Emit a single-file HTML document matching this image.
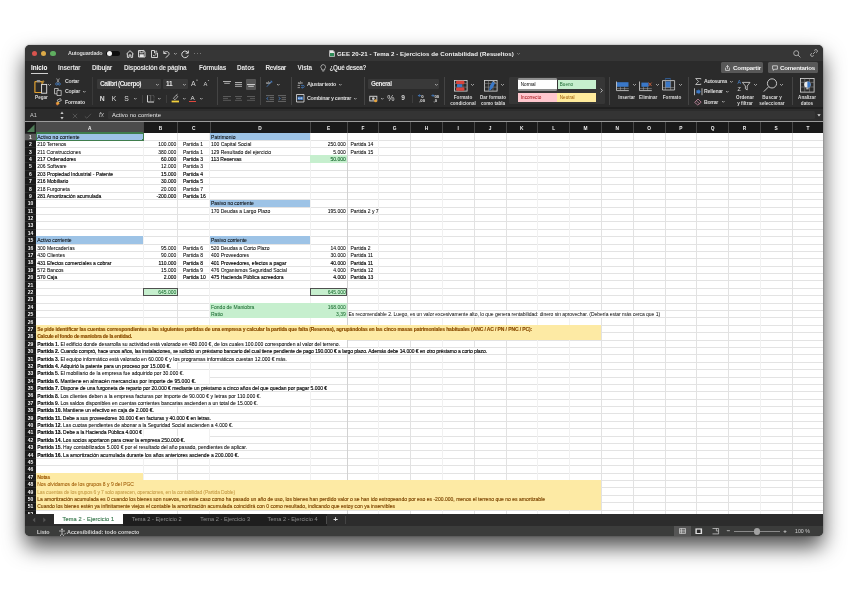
<!DOCTYPE html>
<html lang="es"><head><meta charset="utf-8"><title>Excel</title>
<style>
html,body{margin:0;padding:0;background:#fff;}
body{width:848px;height:599px;position:relative;overflow:hidden;font-family:"Liberation Sans",sans-serif;}
#shadow{position:absolute;left:25px;top:45px;width:798px;height:491px;border-radius:5px;box-shadow:0 11px 21px rgba(0,0,0,.7),0 0 2px rgba(0,0,0,.4);}
#win{position:absolute;left:25px;top:45px;width:798px;height:491px;border-radius:5px;overflow:hidden;background:#2b2b2b;}
#in{position:absolute;left:-25px;top:-45px;width:848px;height:599px;will-change:transform;}
#in div,#in span,#in svg{position:absolute;}
#in span{white-space:pre;}
</style></head><body>
<div id="shadow"></div>
<div id="win"><div id="in">
<div style="left:25.00px;top:45.00px;width:798.00px;height:15.60px;background:#363636;"></div>
<div style="left:25.00px;top:60.60px;width:798.00px;height:47.00px;background:#2b2b2b;"></div>
<div style="left:25.00px;top:107.30px;width:798.00px;height:1.70px;background:#202020;"></div>
<div style="left:25.00px;top:109.00px;width:798.00px;height:12.50px;background:#2c2c2c;"></div>
<div style="left:25.00px;top:121.20px;width:798.00px;height:1.00px;background:#9c9c9c;"></div>
<div style="left:25.00px;top:122.20px;width:798.00px;height:11.00px;background:#1a1a1a;"></div>
<div style="left:25.00px;top:133.00px;width:11.00px;height:381.50px;background:#1a1a1a;"></div>
<div style="left:36.00px;top:133.00px;width:787.00px;height:381.50px;background:#ffffff;"></div>
<div style="left:25.00px;top:514.50px;width:798.00px;height:11.50px;background:#2a2a2a;"></div>
<div style="left:25.00px;top:526.00px;width:798.00px;height:10.00px;background:#3a3b3a;"></div>
<div style="left:31.75px;top:50.55px;width:5.30px;height:5.30px;background:#d9544e;border-radius:50%;"></div>
<div style="left:41.15px;top:50.55px;width:5.30px;height:5.30px;background:#dcaa48;border-radius:50%;"></div>
<div style="left:50.35px;top:50.55px;width:5.30px;height:5.30px;background:#5fae60;border-radius:50%;"></div>
<span style="top:50.16px;font-size:5.4px;line-height:6.48px;color:#dadada;letter-spacing:-0.199px;font-weight:bold;left:68.00px;">Autoguardado</span>
<div style="left:106.30px;top:50.60px;width:13.40px;height:5.60px;background:#0e0e0e;border-radius:2.8px;"></div>
<div style="left:106.70px;top:50.90px;width:5.00px;height:5.00px;background:#f4f4f4;border-radius:50%;"></div>
<span style="top:49.74px;font-size:6.1px;line-height:7.32px;color:#f2f2f2;letter-spacing:0.072px;font-weight:bold;left:337.00px;">GEE 20-21 - Tema 2 - Ejercicios de Contabilidad (Resueltos)</span>
<span style="top:63.76px;font-size:6.4px;line-height:7.68px;color:#ffffff;letter-spacing:-0.035px;font-weight:bold;left:31.00px;">Inicio</span>
<span style="top:63.76px;font-size:6.4px;line-height:7.68px;color:#e4e4e4;letter-spacing:-0.122px;font-weight:bold;left:58.00px;">Insertar</span>
<span style="top:63.76px;font-size:6.4px;line-height:7.68px;color:#e4e4e4;letter-spacing:-0.292px;font-weight:bold;left:92.00px;">Dibujar</span>
<span style="top:63.76px;font-size:6.4px;line-height:7.68px;color:#e4e4e4;letter-spacing:-0.258px;font-weight:bold;left:124.00px;">Disposición de página</span>
<span style="top:63.76px;font-size:6.4px;line-height:7.68px;color:#e4e4e4;letter-spacing:-0.226px;font-weight:bold;left:199.00px;">Fórmulas</span>
<span style="top:63.76px;font-size:6.4px;line-height:7.68px;color:#e4e4e4;letter-spacing:-0.056px;font-weight:bold;left:237.00px;">Datos</span>
<span style="top:63.76px;font-size:6.4px;line-height:7.68px;color:#e4e4e4;letter-spacing:-0.375px;font-weight:bold;left:265.50px;">Revisar</span>
<span style="top:63.76px;font-size:6.4px;line-height:7.68px;color:#e4e4e4;letter-spacing:-0.136px;font-weight:bold;left:297.50px;">Vista</span>
<span style="top:63.76px;font-size:6.4px;line-height:7.68px;color:#e4e4e4;letter-spacing:-0.335px;font-weight:bold;left:329.50px;">¿Qué desea?</span>
<div style="left:31.00px;top:72.60px;width:16.50px;height:1.00px;background:#d0d0d0;"></div>
<div style="left:721.00px;top:62.10px;width:42.00px;height:11.10px;background:#585858;border-radius:1.5px;"></div>
<div style="left:768.00px;top:62.10px;width:50.00px;height:11.10px;background:#585858;border-radius:1.5px;"></div>
<span style="top:64.18px;font-size:6.2px;line-height:7.44px;color:#f4f4f4;letter-spacing:-0.181px;font-weight:bold;left:733.00px;">Compartir</span>
<span style="top:64.18px;font-size:6.2px;line-height:7.44px;color:#f4f4f4;letter-spacing:-0.263px;font-weight:bold;left:780.00px;">Comentarios</span>
<span style="top:94.74px;font-size:4.6px;line-height:5.52px;color:#dcdcdc;font-weight:bold;left:-58.50px;width:200px;text-align:center;">Pegar</span>
<span style="top:78.38px;font-size:5.2px;line-height:6.24px;color:#dcdcdc;letter-spacing:-0.267px;font-weight:bold;left:65.00px;">Cortar</span>
<span style="top:88.38px;font-size:5.2px;line-height:6.24px;color:#dcdcdc;letter-spacing:-0.245px;font-weight:bold;left:65.00px;">Copiar</span>
<span style="top:98.88px;font-size:5.2px;line-height:6.24px;color:#dcdcdc;letter-spacing:-0.114px;font-weight:bold;left:65.00px;">Formato</span>
<div style="left:97.00px;top:78.75px;width:64.00px;height:10.60px;background:#393939;border-radius:1px;"></div>
<div style="left:163.00px;top:78.75px;width:24.50px;height:10.60px;background:#393939;border-radius:1px;"></div>
<span style="top:80.20px;font-size:6.5px;line-height:7.80px;color:#ececec;letter-spacing:-0.507px;font-weight:bold;left:100.00px;">Calibri (Cuerpo)</span>
<span style="top:80.20px;font-size:6.5px;line-height:7.80px;color:#ececec;letter-spacing:-0.135px;font-weight:bold;left:166.00px;">11</span>
<span style="top:94.52px;font-size:6.8px;line-height:8.16px;color:#dcdcdc;font-weight:bold;left:99.80px;">N</span>
<span style="top:94.52px;font-size:6.8px;line-height:8.16px;color:#dcdcdc;left:111.80px;">K</span>
<span style="top:94.52px;font-size:6.8px;line-height:8.16px;color:#dcdcdc;left:124.20px;">S</span>
<div style="left:217.30px;top:77.00px;width:0.60px;height:28.00px;background:#444444;"></div>
<div style="left:260.00px;top:77.00px;width:0.60px;height:28.00px;background:#444444;"></div>
<div style="left:291.00px;top:77.00px;width:0.60px;height:28.00px;background:#444444;"></div>
<div style="left:364.00px;top:77.00px;width:0.60px;height:28.00px;background:#444444;"></div>
<div style="left:444.30px;top:77.00px;width:0.60px;height:28.00px;background:#444444;"></div>
<div style="left:608.90px;top:77.00px;width:0.60px;height:28.00px;background:#444444;"></div>
<div style="left:687.80px;top:77.00px;width:0.60px;height:28.00px;background:#444444;"></div>
<div style="left:791.80px;top:77.00px;width:0.60px;height:28.00px;background:#444444;"></div>
<div style="left:91.50px;top:77.00px;width:0.60px;height:28.00px;background:#3a3a3a;"></div>
<span style="top:80.76px;font-size:5.4px;line-height:6.48px;color:#dcdcdc;letter-spacing:-0.308px;font-weight:bold;left:307.00px;">Ajustar texto</span>
<span style="top:95.26px;font-size:5.4px;line-height:6.48px;color:#dcdcdc;letter-spacing:-0.306px;font-weight:bold;left:307.00px;">Combinar y centrar</span>
<div style="left:368.00px;top:78.75px;width:70.70px;height:10.60px;background:#393939;border-radius:1px;"></div>
<span style="top:80.26px;font-size:6.4px;line-height:7.68px;color:#ececec;letter-spacing:-0.476px;font-weight:bold;left:371.00px;">General</span>
<span style="top:93.58px;font-size:8.2px;line-height:9.84px;color:#dcdcdc;left:387.30px;">%</span>
<span style="top:94.64px;font-size:4.6px;line-height:5.52px;color:#dcdcdc;font-weight:bold;left:363.00px;width:200px;text-align:center;">Formato</span>
<span style="top:100.54px;font-size:4.6px;line-height:5.52px;color:#dcdcdc;font-weight:bold;left:363.00px;width:200px;text-align:center;">condicional</span>
<span style="top:94.64px;font-size:4.6px;line-height:5.52px;color:#dcdcdc;font-weight:bold;left:393.00px;width:200px;text-align:center;">Dar formato</span>
<span style="top:100.54px;font-size:4.6px;line-height:5.52px;color:#dcdcdc;font-weight:bold;left:393.00px;width:200px;text-align:center;">como tabla</span>
<div style="left:509.00px;top:77.00px;width:95.50px;height:27.00px;background:#363636;border-radius:1.5px;"></div>
<div style="left:517.60px;top:78.10px;width:39.80px;height:12.50px;background:#8e8e8e;border-radius:1.2px;"></div>
<div style="left:518.20px;top:79.70px;width:38.60px;height:9.30px;background:#ffffff;"></div>
<div style="left:557.50px;top:80.00px;width:38.60px;height:8.80px;background:#c6efce;"></div>
<div style="left:518.20px;top:92.80px;width:39.00px;height:8.90px;background:#ffc7ce;"></div>
<div style="left:557.20px;top:92.80px;width:39.30px;height:8.90px;background:#ffeb9c;"></div>
<span style="top:81.84px;font-size:4.6px;line-height:5.52px;color:#000;left:520.80px;">Normal</span>
<span style="top:81.84px;font-size:4.6px;line-height:5.52px;color:#1d6b32;left:559.80px;">Bueno</span>
<span style="top:94.64px;font-size:4.6px;line-height:5.52px;color:#9c0006;left:520.80px;">Incorrecto</span>
<span style="top:94.64px;font-size:4.6px;line-height:5.52px;color:#9c5700;left:559.80px;">Neutral</span>
<span style="top:94.64px;font-size:4.6px;line-height:5.52px;color:#dcdcdc;font-weight:bold;left:526.60px;width:200px;text-align:center;">Insertar</span>
<span style="top:94.64px;font-size:4.6px;line-height:5.52px;color:#dcdcdc;font-weight:bold;left:548.20px;width:200px;text-align:center;">Eliminar</span>
<span style="top:94.64px;font-size:4.6px;line-height:5.52px;color:#dcdcdc;font-weight:bold;left:572.00px;width:200px;text-align:center;">Formato</span>
<span style="top:78.38px;font-size:5.2px;line-height:6.24px;color:#dcdcdc;letter-spacing:-0.303px;font-weight:bold;left:704.00px;">Autosuma</span>
<span style="top:88.38px;font-size:5.2px;line-height:6.24px;color:#dcdcdc;letter-spacing:-0.190px;font-weight:bold;left:704.00px;">Rellenar</span>
<span style="top:98.88px;font-size:5.2px;line-height:6.24px;color:#dcdcdc;letter-spacing:-0.316px;font-weight:bold;left:704.00px;">Borrar</span>
<span style="top:94.64px;font-size:4.6px;line-height:5.52px;color:#dcdcdc;font-weight:bold;left:645.00px;width:200px;text-align:center;">Ordenar</span>
<span style="top:100.54px;font-size:4.6px;line-height:5.52px;color:#dcdcdc;font-weight:bold;left:645.00px;width:200px;text-align:center;">y filtrar</span>
<span style="top:94.64px;font-size:4.6px;line-height:5.52px;color:#dcdcdc;font-weight:bold;left:672.00px;width:200px;text-align:center;">Buscar y</span>
<span style="top:100.54px;font-size:4.6px;line-height:5.52px;color:#dcdcdc;font-weight:bold;left:672.00px;width:200px;text-align:center;">seleccionar</span>
<span style="top:94.64px;font-size:4.6px;line-height:5.52px;color:#dcdcdc;font-weight:bold;left:707.00px;width:200px;text-align:center;">Analizar</span>
<span style="top:100.54px;font-size:4.6px;line-height:5.52px;color:#dcdcdc;font-weight:bold;left:707.00px;width:200px;text-align:center;">datos</span>
<div style="left:107.50px;top:110.60px;width:707.00px;height:8.80px;background:#343434;border-radius:1.2px;"></div>
<span style="top:112.14px;font-size:5.6px;line-height:6.72px;color:#c8c8c8;left:30.00px;">A1</span>
<span style="top:112.02px;font-size:5.8px;line-height:6.96px;color:#e8e8e8;letter-spacing:0.051px;left:112.00px;">Activo no corriente</span>
<span style="top:111.46px;font-size:6.4px;line-height:7.68px;color:#bdbdbd;left:99.00px;font-style:italic;font-family:"Liberation Serif",serif;">fx</span>
<div style="left:36.00px;top:122.20px;width:107.30px;height:11.00px;background:#4c4c4c;"></div>
<div style="left:36.00px;top:132.40px;width:107.30px;height:0.90px;background:#3f7d4c;"></div>
<span style="top:125.62px;font-size:4.8px;line-height:5.76px;color:#f0f0f0;font-weight:bold;left:-10.35px;width:200px;text-align:center;">A</span>
<span style="top:125.62px;font-size:4.8px;line-height:5.76px;color:#f0f0f0;font-weight:bold;left:60.40px;width:200px;text-align:center;">B</span>
<div style="left:143.00px;top:122.20px;width:0.70px;height:11.00px;background:#484848;"></div>
<span style="top:125.62px;font-size:4.8px;line-height:5.76px;color:#f0f0f0;font-weight:bold;left:93.65px;width:200px;text-align:center;">C</span>
<div style="left:177.20px;top:122.20px;width:0.70px;height:11.00px;background:#484848;"></div>
<span style="top:125.62px;font-size:4.8px;line-height:5.76px;color:#f0f0f0;font-weight:bold;left:159.95px;width:200px;text-align:center;">D</span>
<div style="left:209.50px;top:122.20px;width:0.70px;height:11.00px;background:#484848;"></div>
<span style="top:125.62px;font-size:4.8px;line-height:5.76px;color:#f0f0f0;font-weight:bold;left:228.55px;width:200px;text-align:center;">E</span>
<div style="left:309.80px;top:122.20px;width:0.70px;height:11.00px;background:#484848;"></div>
<span style="top:125.62px;font-size:4.8px;line-height:5.76px;color:#f0f0f0;font-weight:bold;left:262.85px;width:200px;text-align:center;">F</span>
<div style="left:346.70px;top:122.20px;width:0.70px;height:11.00px;background:#484848;"></div>
<span style="top:125.62px;font-size:4.8px;line-height:5.76px;color:#f0f0f0;font-weight:bold;left:294.60px;width:200px;text-align:center;">G</span>
<div style="left:378.40px;top:122.20px;width:0.70px;height:11.00px;background:#484848;"></div>
<span style="top:125.62px;font-size:4.8px;line-height:5.76px;color:#f0f0f0;font-weight:bold;left:326.40px;width:200px;text-align:center;">H</span>
<div style="left:410.20px;top:122.20px;width:0.70px;height:11.00px;background:#484848;"></div>
<span style="top:125.62px;font-size:4.8px;line-height:5.76px;color:#f0f0f0;font-weight:bold;left:358.20px;width:200px;text-align:center;">I</span>
<div style="left:442.00px;top:122.20px;width:0.70px;height:11.00px;background:#484848;"></div>
<span style="top:125.62px;font-size:4.8px;line-height:5.76px;color:#f0f0f0;font-weight:bold;left:390.00px;width:200px;text-align:center;">J</span>
<div style="left:473.80px;top:122.20px;width:0.70px;height:11.00px;background:#484848;"></div>
<span style="top:125.62px;font-size:4.8px;line-height:5.76px;color:#f0f0f0;font-weight:bold;left:421.80px;width:200px;text-align:center;">K</span>
<div style="left:505.60px;top:122.20px;width:0.70px;height:11.00px;background:#484848;"></div>
<span style="top:125.62px;font-size:4.8px;line-height:5.76px;color:#f0f0f0;font-weight:bold;left:453.60px;width:200px;text-align:center;">L</span>
<div style="left:537.40px;top:122.20px;width:0.70px;height:11.00px;background:#484848;"></div>
<span style="top:125.62px;font-size:4.8px;line-height:5.76px;color:#f0f0f0;font-weight:bold;left:485.40px;width:200px;text-align:center;">M</span>
<div style="left:569.20px;top:122.20px;width:0.70px;height:11.00px;background:#484848;"></div>
<span style="top:125.62px;font-size:4.8px;line-height:5.76px;color:#f0f0f0;font-weight:bold;left:517.20px;width:200px;text-align:center;">N</span>
<div style="left:601.00px;top:122.20px;width:0.70px;height:11.00px;background:#484848;"></div>
<span style="top:125.62px;font-size:4.8px;line-height:5.76px;color:#f0f0f0;font-weight:bold;left:549.00px;width:200px;text-align:center;">O</span>
<div style="left:632.80px;top:122.20px;width:0.70px;height:11.00px;background:#484848;"></div>
<span style="top:125.62px;font-size:4.8px;line-height:5.76px;color:#f0f0f0;font-weight:bold;left:580.80px;width:200px;text-align:center;">P</span>
<div style="left:664.60px;top:122.20px;width:0.70px;height:11.00px;background:#484848;"></div>
<span style="top:125.62px;font-size:4.8px;line-height:5.76px;color:#f0f0f0;font-weight:bold;left:612.60px;width:200px;text-align:center;">Q</span>
<div style="left:696.40px;top:122.20px;width:0.70px;height:11.00px;background:#484848;"></div>
<span style="top:125.62px;font-size:4.8px;line-height:5.76px;color:#f0f0f0;font-weight:bold;left:644.40px;width:200px;text-align:center;">R</span>
<div style="left:728.20px;top:122.20px;width:0.70px;height:11.00px;background:#484848;"></div>
<span style="top:125.62px;font-size:4.8px;line-height:5.76px;color:#f0f0f0;font-weight:bold;left:676.20px;width:200px;text-align:center;">S</span>
<div style="left:760.00px;top:122.20px;width:0.70px;height:11.00px;background:#484848;"></div>
<span style="top:125.62px;font-size:4.8px;line-height:5.76px;color:#f0f0f0;font-weight:bold;left:708.00px;width:200px;text-align:center;">T</span>
<div style="left:791.80px;top:122.20px;width:0.70px;height:11.00px;background:#484848;"></div>
<div style="left:143.00px;top:122.20px;width:0.70px;height:11.00px;background:#484848;"></div>
<svg style="left:26px;top:123.5px;width:9px;height:8.5px" viewBox="0 0 9 8.5"><path d="M8.5 0.5V8H1z" fill="#4f7d57"/></svg>
<div style="left:25.00px;top:133.00px;width:11.00px;height:7.39px;background:#5a5a5a;"></div>
<span style="top:133.79px;font-size:5.0px;line-height:6.00px;color:#f4f4f4;font-weight:bold;left:-69.50px;width:200px;text-align:center;">1</span>
<div style="left:25.00px;top:132.70px;width:11.00px;height:0.60px;background:#2c2c2c;"></div>
<span style="top:141.18px;font-size:5.0px;line-height:6.00px;color:#f4f4f4;font-weight:bold;left:-69.50px;width:200px;text-align:center;">2</span>
<div style="left:25.00px;top:140.09px;width:11.00px;height:0.60px;background:#2c2c2c;"></div>
<span style="top:148.57px;font-size:5.0px;line-height:6.00px;color:#f4f4f4;font-weight:bold;left:-69.50px;width:200px;text-align:center;">3</span>
<div style="left:25.00px;top:147.48px;width:11.00px;height:0.60px;background:#2c2c2c;"></div>
<span style="top:155.96px;font-size:5.0px;line-height:6.00px;color:#f4f4f4;font-weight:bold;left:-69.50px;width:200px;text-align:center;">4</span>
<div style="left:25.00px;top:154.87px;width:11.00px;height:0.60px;background:#2c2c2c;"></div>
<span style="top:163.35px;font-size:5.0px;line-height:6.00px;color:#f4f4f4;font-weight:bold;left:-69.50px;width:200px;text-align:center;">5</span>
<div style="left:25.00px;top:162.26px;width:11.00px;height:0.60px;background:#2c2c2c;"></div>
<span style="top:170.74px;font-size:5.0px;line-height:6.00px;color:#f4f4f4;font-weight:bold;left:-69.50px;width:200px;text-align:center;">6</span>
<div style="left:25.00px;top:169.65px;width:11.00px;height:0.60px;background:#2c2c2c;"></div>
<span style="top:178.13px;font-size:5.0px;line-height:6.00px;color:#f4f4f4;font-weight:bold;left:-69.50px;width:200px;text-align:center;">7</span>
<div style="left:25.00px;top:177.04px;width:11.00px;height:0.60px;background:#2c2c2c;"></div>
<span style="top:185.52px;font-size:5.0px;line-height:6.00px;color:#f4f4f4;font-weight:bold;left:-69.50px;width:200px;text-align:center;">8</span>
<div style="left:25.00px;top:184.43px;width:11.00px;height:0.60px;background:#2c2c2c;"></div>
<span style="top:192.91px;font-size:5.0px;line-height:6.00px;color:#f4f4f4;font-weight:bold;left:-69.50px;width:200px;text-align:center;">9</span>
<div style="left:25.00px;top:191.82px;width:11.00px;height:0.60px;background:#2c2c2c;"></div>
<span style="top:200.30px;font-size:5.0px;line-height:6.00px;color:#f4f4f4;font-weight:bold;left:-69.50px;width:200px;text-align:center;">10</span>
<div style="left:25.00px;top:199.21px;width:11.00px;height:0.60px;background:#2c2c2c;"></div>
<span style="top:207.69px;font-size:5.0px;line-height:6.00px;color:#f4f4f4;font-weight:bold;left:-69.50px;width:200px;text-align:center;">11</span>
<div style="left:25.00px;top:206.60px;width:11.00px;height:0.60px;background:#2c2c2c;"></div>
<span style="top:215.08px;font-size:5.0px;line-height:6.00px;color:#f4f4f4;font-weight:bold;left:-69.50px;width:200px;text-align:center;">12</span>
<div style="left:25.00px;top:213.99px;width:11.00px;height:0.60px;background:#2c2c2c;"></div>
<span style="top:222.47px;font-size:5.0px;line-height:6.00px;color:#f4f4f4;font-weight:bold;left:-69.50px;width:200px;text-align:center;">13</span>
<div style="left:25.00px;top:221.38px;width:11.00px;height:0.60px;background:#2c2c2c;"></div>
<span style="top:229.86px;font-size:5.0px;line-height:6.00px;color:#f4f4f4;font-weight:bold;left:-69.50px;width:200px;text-align:center;">14</span>
<div style="left:25.00px;top:228.77px;width:11.00px;height:0.60px;background:#2c2c2c;"></div>
<span style="top:237.25px;font-size:5.0px;line-height:6.00px;color:#f4f4f4;font-weight:bold;left:-69.50px;width:200px;text-align:center;">15</span>
<div style="left:25.00px;top:236.16px;width:11.00px;height:0.60px;background:#2c2c2c;"></div>
<span style="top:244.64px;font-size:5.0px;line-height:6.00px;color:#f4f4f4;font-weight:bold;left:-69.50px;width:200px;text-align:center;">16</span>
<div style="left:25.00px;top:243.55px;width:11.00px;height:0.60px;background:#2c2c2c;"></div>
<span style="top:252.03px;font-size:5.0px;line-height:6.00px;color:#f4f4f4;font-weight:bold;left:-69.50px;width:200px;text-align:center;">17</span>
<div style="left:25.00px;top:250.94px;width:11.00px;height:0.60px;background:#2c2c2c;"></div>
<span style="top:259.43px;font-size:5.0px;line-height:6.00px;color:#f4f4f4;font-weight:bold;left:-69.50px;width:200px;text-align:center;">18</span>
<div style="left:25.00px;top:258.33px;width:11.00px;height:0.60px;background:#2c2c2c;"></div>
<span style="top:266.81px;font-size:5.0px;line-height:6.00px;color:#f4f4f4;font-weight:bold;left:-69.50px;width:200px;text-align:center;">19</span>
<div style="left:25.00px;top:265.72px;width:11.00px;height:0.60px;background:#2c2c2c;"></div>
<span style="top:274.20px;font-size:5.0px;line-height:6.00px;color:#f4f4f4;font-weight:bold;left:-69.50px;width:200px;text-align:center;">20</span>
<div style="left:25.00px;top:273.11px;width:11.00px;height:0.60px;background:#2c2c2c;"></div>
<span style="top:281.59px;font-size:5.0px;line-height:6.00px;color:#f4f4f4;font-weight:bold;left:-69.50px;width:200px;text-align:center;">21</span>
<div style="left:25.00px;top:280.50px;width:11.00px;height:0.60px;background:#2c2c2c;"></div>
<span style="top:288.99px;font-size:5.0px;line-height:6.00px;color:#f4f4f4;font-weight:bold;left:-69.50px;width:200px;text-align:center;">22</span>
<div style="left:25.00px;top:287.89px;width:11.00px;height:0.60px;background:#2c2c2c;"></div>
<span style="top:296.38px;font-size:5.0px;line-height:6.00px;color:#f4f4f4;font-weight:bold;left:-69.50px;width:200px;text-align:center;">23</span>
<div style="left:25.00px;top:295.28px;width:11.00px;height:0.60px;background:#2c2c2c;"></div>
<span style="top:303.77px;font-size:5.0px;line-height:6.00px;color:#f4f4f4;font-weight:bold;left:-69.50px;width:200px;text-align:center;">24</span>
<div style="left:25.00px;top:302.67px;width:11.00px;height:0.60px;background:#2c2c2c;"></div>
<span style="top:311.16px;font-size:5.0px;line-height:6.00px;color:#f4f4f4;font-weight:bold;left:-69.50px;width:200px;text-align:center;">25</span>
<div style="left:25.00px;top:310.06px;width:11.00px;height:0.60px;background:#2c2c2c;"></div>
<span style="top:318.55px;font-size:5.0px;line-height:6.00px;color:#f4f4f4;font-weight:bold;left:-69.50px;width:200px;text-align:center;">26</span>
<div style="left:25.00px;top:317.45px;width:11.00px;height:0.60px;background:#2c2c2c;"></div>
<span style="top:325.94px;font-size:5.0px;line-height:6.00px;color:#f4f4f4;font-weight:bold;left:-69.50px;width:200px;text-align:center;">27</span>
<div style="left:25.00px;top:324.84px;width:11.00px;height:0.60px;background:#2c2c2c;"></div>
<span style="top:333.32px;font-size:5.0px;line-height:6.00px;color:#f4f4f4;font-weight:bold;left:-69.50px;width:200px;text-align:center;">28</span>
<div style="left:25.00px;top:332.23px;width:11.00px;height:0.60px;background:#2c2c2c;"></div>
<span style="top:340.71px;font-size:5.0px;line-height:6.00px;color:#f4f4f4;font-weight:bold;left:-69.50px;width:200px;text-align:center;">29</span>
<div style="left:25.00px;top:339.62px;width:11.00px;height:0.60px;background:#2c2c2c;"></div>
<span style="top:348.11px;font-size:5.0px;line-height:6.00px;color:#f4f4f4;font-weight:bold;left:-69.50px;width:200px;text-align:center;">30</span>
<div style="left:25.00px;top:347.01px;width:11.00px;height:0.60px;background:#2c2c2c;"></div>
<span style="top:355.50px;font-size:5.0px;line-height:6.00px;color:#f4f4f4;font-weight:bold;left:-69.50px;width:200px;text-align:center;">31</span>
<div style="left:25.00px;top:354.40px;width:11.00px;height:0.60px;background:#2c2c2c;"></div>
<span style="top:362.89px;font-size:5.0px;line-height:6.00px;color:#f4f4f4;font-weight:bold;left:-69.50px;width:200px;text-align:center;">32</span>
<div style="left:25.00px;top:361.79px;width:11.00px;height:0.60px;background:#2c2c2c;"></div>
<span style="top:370.28px;font-size:5.0px;line-height:6.00px;color:#f4f4f4;font-weight:bold;left:-69.50px;width:200px;text-align:center;">33</span>
<div style="left:25.00px;top:369.18px;width:11.00px;height:0.60px;background:#2c2c2c;"></div>
<span style="top:377.67px;font-size:5.0px;line-height:6.00px;color:#f4f4f4;font-weight:bold;left:-69.50px;width:200px;text-align:center;">34</span>
<div style="left:25.00px;top:376.57px;width:11.00px;height:0.60px;background:#2c2c2c;"></div>
<span style="top:385.06px;font-size:5.0px;line-height:6.00px;color:#f4f4f4;font-weight:bold;left:-69.50px;width:200px;text-align:center;">35</span>
<div style="left:25.00px;top:383.96px;width:11.00px;height:0.60px;background:#2c2c2c;"></div>
<span style="top:392.44px;font-size:5.0px;line-height:6.00px;color:#f4f4f4;font-weight:bold;left:-69.50px;width:200px;text-align:center;">36</span>
<div style="left:25.00px;top:391.35px;width:11.00px;height:0.60px;background:#2c2c2c;"></div>
<span style="top:399.83px;font-size:5.0px;line-height:6.00px;color:#f4f4f4;font-weight:bold;left:-69.50px;width:200px;text-align:center;">37</span>
<div style="left:25.00px;top:398.74px;width:11.00px;height:0.60px;background:#2c2c2c;"></div>
<span style="top:407.23px;font-size:5.0px;line-height:6.00px;color:#f4f4f4;font-weight:bold;left:-69.50px;width:200px;text-align:center;">38</span>
<div style="left:25.00px;top:406.13px;width:11.00px;height:0.60px;background:#2c2c2c;"></div>
<span style="top:414.62px;font-size:5.0px;line-height:6.00px;color:#f4f4f4;font-weight:bold;left:-69.50px;width:200px;text-align:center;">39</span>
<div style="left:25.00px;top:413.52px;width:11.00px;height:0.60px;background:#2c2c2c;"></div>
<span style="top:422.00px;font-size:5.0px;line-height:6.00px;color:#f4f4f4;font-weight:bold;left:-69.50px;width:200px;text-align:center;">40</span>
<div style="left:25.00px;top:420.91px;width:11.00px;height:0.60px;background:#2c2c2c;"></div>
<span style="top:429.39px;font-size:5.0px;line-height:6.00px;color:#f4f4f4;font-weight:bold;left:-69.50px;width:200px;text-align:center;">41</span>
<div style="left:25.00px;top:428.30px;width:11.00px;height:0.60px;background:#2c2c2c;"></div>
<span style="top:436.79px;font-size:5.0px;line-height:6.00px;color:#f4f4f4;font-weight:bold;left:-69.50px;width:200px;text-align:center;">42</span>
<div style="left:25.00px;top:435.69px;width:11.00px;height:0.60px;background:#2c2c2c;"></div>
<span style="top:444.18px;font-size:5.0px;line-height:6.00px;color:#f4f4f4;font-weight:bold;left:-69.50px;width:200px;text-align:center;">43</span>
<div style="left:25.00px;top:443.08px;width:11.00px;height:0.60px;background:#2c2c2c;"></div>
<span style="top:451.56px;font-size:5.0px;line-height:6.00px;color:#f4f4f4;font-weight:bold;left:-69.50px;width:200px;text-align:center;">44</span>
<div style="left:25.00px;top:450.47px;width:11.00px;height:0.60px;background:#2c2c2c;"></div>
<span style="top:458.95px;font-size:5.0px;line-height:6.00px;color:#f4f4f4;font-weight:bold;left:-69.50px;width:200px;text-align:center;">45</span>
<div style="left:25.00px;top:457.86px;width:11.00px;height:0.60px;background:#2c2c2c;"></div>
<span style="top:466.35px;font-size:5.0px;line-height:6.00px;color:#f4f4f4;font-weight:bold;left:-69.50px;width:200px;text-align:center;">46</span>
<div style="left:25.00px;top:465.25px;width:11.00px;height:0.60px;background:#2c2c2c;"></div>
<span style="top:473.74px;font-size:5.0px;line-height:6.00px;color:#f4f4f4;font-weight:bold;left:-69.50px;width:200px;text-align:center;">47</span>
<div style="left:25.00px;top:472.64px;width:11.00px;height:0.60px;background:#2c2c2c;"></div>
<span style="top:481.12px;font-size:5.0px;line-height:6.00px;color:#f4f4f4;font-weight:bold;left:-69.50px;width:200px;text-align:center;">48</span>
<div style="left:25.00px;top:480.03px;width:11.00px;height:0.60px;background:#2c2c2c;"></div>
<span style="top:488.51px;font-size:5.0px;line-height:6.00px;color:#f4f4f4;font-weight:bold;left:-69.50px;width:200px;text-align:center;">49</span>
<div style="left:25.00px;top:487.42px;width:11.00px;height:0.60px;background:#2c2c2c;"></div>
<span style="top:495.90px;font-size:5.0px;line-height:6.00px;color:#f4f4f4;font-weight:bold;left:-69.50px;width:200px;text-align:center;">50</span>
<div style="left:25.00px;top:494.81px;width:11.00px;height:0.60px;background:#2c2c2c;"></div>
<span style="top:503.30px;font-size:5.0px;line-height:6.00px;color:#f4f4f4;font-weight:bold;left:-69.50px;width:200px;text-align:center;">51</span>
<div style="left:25.00px;top:502.20px;width:11.00px;height:0.60px;background:#2c2c2c;"></div>
<span style="top:510.69px;font-size:5.0px;line-height:6.00px;color:#f4f4f4;font-weight:bold;left:-69.50px;width:200px;text-align:center;">52</span>
<div style="left:25.00px;top:509.59px;width:11.00px;height:0.60px;background:#2c2c2c;"></div>
<div style="left:36.00px;top:140.04px;width:787.00px;height:0.70px;background:#e3e3e3;"></div>
<div style="left:36.00px;top:147.43px;width:787.00px;height:0.70px;background:#e3e3e3;"></div>
<div style="left:36.00px;top:154.82px;width:787.00px;height:0.70px;background:#e3e3e3;"></div>
<div style="left:36.00px;top:162.21px;width:787.00px;height:0.70px;background:#e3e3e3;"></div>
<div style="left:36.00px;top:169.60px;width:787.00px;height:0.70px;background:#e3e3e3;"></div>
<div style="left:36.00px;top:176.99px;width:787.00px;height:0.70px;background:#e3e3e3;"></div>
<div style="left:36.00px;top:184.38px;width:787.00px;height:0.70px;background:#e3e3e3;"></div>
<div style="left:36.00px;top:191.77px;width:787.00px;height:0.70px;background:#e3e3e3;"></div>
<div style="left:36.00px;top:199.16px;width:787.00px;height:0.70px;background:#e3e3e3;"></div>
<div style="left:36.00px;top:206.55px;width:787.00px;height:0.70px;background:#e3e3e3;"></div>
<div style="left:36.00px;top:213.94px;width:787.00px;height:0.70px;background:#e3e3e3;"></div>
<div style="left:36.00px;top:221.33px;width:787.00px;height:0.70px;background:#e3e3e3;"></div>
<div style="left:36.00px;top:228.72px;width:787.00px;height:0.70px;background:#e3e3e3;"></div>
<div style="left:36.00px;top:236.11px;width:787.00px;height:0.70px;background:#e3e3e3;"></div>
<div style="left:36.00px;top:243.50px;width:787.00px;height:0.70px;background:#e3e3e3;"></div>
<div style="left:36.00px;top:250.89px;width:787.00px;height:0.70px;background:#e3e3e3;"></div>
<div style="left:36.00px;top:258.28px;width:787.00px;height:0.70px;background:#e3e3e3;"></div>
<div style="left:36.00px;top:265.67px;width:787.00px;height:0.70px;background:#e3e3e3;"></div>
<div style="left:36.00px;top:273.06px;width:787.00px;height:0.70px;background:#e3e3e3;"></div>
<div style="left:36.00px;top:280.45px;width:787.00px;height:0.70px;background:#e3e3e3;"></div>
<div style="left:36.00px;top:287.84px;width:787.00px;height:0.70px;background:#e3e3e3;"></div>
<div style="left:36.00px;top:295.23px;width:787.00px;height:0.70px;background:#e3e3e3;"></div>
<div style="left:36.00px;top:302.62px;width:787.00px;height:0.70px;background:#e3e3e3;"></div>
<div style="left:36.00px;top:310.01px;width:787.00px;height:0.70px;background:#e3e3e3;"></div>
<div style="left:36.00px;top:317.40px;width:787.00px;height:0.70px;background:#e3e3e3;"></div>
<div style="left:36.00px;top:324.79px;width:787.00px;height:0.70px;background:#e3e3e3;"></div>
<div style="left:36.00px;top:332.18px;width:787.00px;height:0.70px;background:#e3e3e3;"></div>
<div style="left:36.00px;top:339.57px;width:787.00px;height:0.70px;background:#e3e3e3;"></div>
<div style="left:36.00px;top:346.96px;width:787.00px;height:0.70px;background:#e3e3e3;"></div>
<div style="left:36.00px;top:354.35px;width:787.00px;height:0.70px;background:#e3e3e3;"></div>
<div style="left:36.00px;top:361.74px;width:787.00px;height:0.70px;background:#e3e3e3;"></div>
<div style="left:36.00px;top:369.13px;width:787.00px;height:0.70px;background:#e3e3e3;"></div>
<div style="left:36.00px;top:376.52px;width:787.00px;height:0.70px;background:#e3e3e3;"></div>
<div style="left:36.00px;top:383.91px;width:787.00px;height:0.70px;background:#e3e3e3;"></div>
<div style="left:36.00px;top:391.30px;width:787.00px;height:0.70px;background:#e3e3e3;"></div>
<div style="left:36.00px;top:398.69px;width:787.00px;height:0.70px;background:#e3e3e3;"></div>
<div style="left:36.00px;top:406.08px;width:787.00px;height:0.70px;background:#e3e3e3;"></div>
<div style="left:36.00px;top:413.47px;width:787.00px;height:0.70px;background:#e3e3e3;"></div>
<div style="left:36.00px;top:420.86px;width:787.00px;height:0.70px;background:#e3e3e3;"></div>
<div style="left:36.00px;top:428.25px;width:787.00px;height:0.70px;background:#e3e3e3;"></div>
<div style="left:36.00px;top:435.64px;width:787.00px;height:0.70px;background:#e3e3e3;"></div>
<div style="left:36.00px;top:443.03px;width:787.00px;height:0.70px;background:#e3e3e3;"></div>
<div style="left:36.00px;top:450.42px;width:787.00px;height:0.70px;background:#e3e3e3;"></div>
<div style="left:36.00px;top:457.81px;width:787.00px;height:0.70px;background:#e3e3e3;"></div>
<div style="left:36.00px;top:465.20px;width:787.00px;height:0.70px;background:#e3e3e3;"></div>
<div style="left:36.00px;top:472.59px;width:787.00px;height:0.70px;background:#e3e3e3;"></div>
<div style="left:36.00px;top:479.98px;width:787.00px;height:0.70px;background:#e3e3e3;"></div>
<div style="left:36.00px;top:487.37px;width:787.00px;height:0.70px;background:#e3e3e3;"></div>
<div style="left:36.00px;top:494.76px;width:787.00px;height:0.70px;background:#e3e3e3;"></div>
<div style="left:36.00px;top:502.15px;width:787.00px;height:0.70px;background:#e3e3e3;"></div>
<div style="left:36.00px;top:509.54px;width:787.00px;height:0.70px;background:#e3e3e3;"></div>
<div style="left:142.95px;top:133.00px;width:0.70px;height:381.50px;background:#f1f1f1;"></div>
<div style="left:177.15px;top:133.00px;width:0.70px;height:381.50px;background:#e2e2e2;"></div>
<div style="left:209.45px;top:133.00px;width:0.70px;height:381.50px;background:#f1f1f1;"></div>
<div style="left:309.75px;top:133.00px;width:0.70px;height:381.50px;background:#f1f1f1;"></div>
<div style="left:346.65px;top:133.00px;width:0.70px;height:381.50px;background:#d2d2d2;"></div>
<div style="left:378.35px;top:133.00px;width:0.70px;height:381.50px;background:#f1f1f1;"></div>
<div style="left:410.15px;top:133.00px;width:0.70px;height:381.50px;background:#e2e2e2;"></div>
<div style="left:441.95px;top:133.00px;width:0.70px;height:381.50px;background:#f1f1f1;"></div>
<div style="left:473.75px;top:133.00px;width:0.70px;height:381.50px;background:#e2e2e2;"></div>
<div style="left:505.55px;top:133.00px;width:0.70px;height:381.50px;background:#e2e2e2;"></div>
<div style="left:537.35px;top:133.00px;width:0.70px;height:381.50px;background:#f1f1f1;"></div>
<div style="left:569.15px;top:133.00px;width:0.70px;height:381.50px;background:#f1f1f1;"></div>
<div style="left:600.95px;top:133.00px;width:0.70px;height:381.50px;background:#e2e2e2;"></div>
<div style="left:632.75px;top:133.00px;width:0.70px;height:381.50px;background:#e2e2e2;"></div>
<div style="left:664.55px;top:133.00px;width:0.70px;height:381.50px;background:#e2e2e2;"></div>
<div style="left:696.35px;top:133.00px;width:0.70px;height:381.50px;background:#e2e2e2;"></div>
<div style="left:728.15px;top:133.00px;width:0.70px;height:381.50px;background:#e2e2e2;"></div>
<div style="left:759.95px;top:133.00px;width:0.70px;height:381.50px;background:#f1f1f1;"></div>
<div style="left:791.75px;top:133.00px;width:0.70px;height:381.50px;background:#e2e2e2;"></div>
<div style="left:823.55px;top:133.00px;width:0.70px;height:381.50px;background:#e2e2e2;"></div>
<div style="left:36.00px;top:133.00px;width:107.30px;height:7.39px;background:#9dc3e6;"></div>
<div style="left:209.80px;top:133.00px;width:100.30px;height:7.39px;background:#9dc3e6;"></div>
<div style="left:209.80px;top:199.51px;width:100.30px;height:7.39px;background:#9dc3e6;"></div>
<div style="left:36.00px;top:236.46px;width:107.30px;height:7.39px;background:#9dc3e6;"></div>
<div style="left:209.80px;top:236.46px;width:100.30px;height:7.39px;background:#9dc3e6;"></div>
<div style="left:310.10px;top:155.17px;width:36.90px;height:7.39px;background:#c6efce;"></div>
<div style="left:143.30px;top:288.19px;width:34.20px;height:7.39px;background:#c6efce;"></div>
<div style="left:310.10px;top:288.19px;width:36.90px;height:7.39px;background:#c6efce;"></div>
<div style="left:209.80px;top:302.97px;width:137.20px;height:14.78px;background:#c6efce;"></div>
<div style="left:36.00px;top:325.14px;width:565.30px;height:14.78px;background:#fdeaa4;"></div>
<div style="left:36.00px;top:472.94px;width:107.30px;height:7.39px;background:#fdeaa4;"></div>
<div style="left:36.00px;top:480.33px;width:565.30px;height:29.56px;background:#fdeaa4;"></div>
<span style="top:133.89px;font-size:5.0px;line-height:6.00px;color:#000;letter-spacing:0.058px;left:37.20px;-webkit-text-stroke:0.05px currentColor;">Activo no corriente</span>
<span style="top:133.89px;font-size:5.0px;line-height:6.00px;color:#000;letter-spacing:0.070px;left:211.00px;-webkit-text-stroke:0.05px currentColor;">Patrimonio</span>
<span style="top:141.28px;font-size:5.0px;line-height:6.00px;color:#000;letter-spacing:0.000px;left:37.20px;-webkit-text-stroke:0.05px currentColor;">210 Terrenos</span>
<span style="top:141.28px;font-size:5.0px;line-height:6.00px;color:#000;letter-spacing:0.000px;right:671.70px;-webkit-text-stroke:0.05px currentColor;">100.000</span>
<span style="top:141.28px;font-size:5.0px;line-height:6.00px;color:#000;letter-spacing:0.000px;left:183.00px;-webkit-text-stroke:0.05px currentColor;">Partida 1</span>
<span style="top:148.67px;font-size:5.0px;line-height:6.00px;color:#000;letter-spacing:0.000px;left:37.20px;-webkit-text-stroke:0.05px currentColor;">211 Construcciones</span>
<span style="top:148.67px;font-size:5.0px;line-height:6.00px;color:#000;letter-spacing:0.000px;right:671.70px;-webkit-text-stroke:0.05px currentColor;">380.000</span>
<span style="top:148.67px;font-size:5.0px;line-height:6.00px;color:#000;letter-spacing:0.000px;left:183.00px;-webkit-text-stroke:0.05px currentColor;">Partida 1</span>
<span style="top:156.06px;font-size:5.0px;line-height:6.00px;color:#000;letter-spacing:0.000px;left:37.20px;-webkit-text-stroke:0.14px currentColor;">217 Ordenadores</span>
<span style="top:156.06px;font-size:5.0px;line-height:6.00px;color:#000;letter-spacing:0.000px;right:671.70px;-webkit-text-stroke:0.14px currentColor;">60.000</span>
<span style="top:156.06px;font-size:5.0px;line-height:6.00px;color:#000;letter-spacing:0.000px;left:183.00px;-webkit-text-stroke:0.14px currentColor;">Partida 3</span>
<span style="top:163.45px;font-size:5.0px;line-height:6.00px;color:#000;letter-spacing:0.000px;left:37.20px;-webkit-text-stroke:0.05px currentColor;">206 Software</span>
<span style="top:163.45px;font-size:5.0px;line-height:6.00px;color:#000;letter-spacing:0.000px;right:671.70px;-webkit-text-stroke:0.05px currentColor;">12.000</span>
<span style="top:163.45px;font-size:5.0px;line-height:6.00px;color:#000;letter-spacing:0.000px;left:183.00px;-webkit-text-stroke:0.05px currentColor;">Partida 3</span>
<span style="top:170.84px;font-size:5.0px;line-height:6.00px;color:#000;letter-spacing:0.000px;left:37.20px;-webkit-text-stroke:0.14px currentColor;">203 Propiedad Industrial - Patente</span>
<span style="top:170.84px;font-size:5.0px;line-height:6.00px;color:#000;letter-spacing:0.000px;right:671.70px;-webkit-text-stroke:0.14px currentColor;">15.000</span>
<span style="top:170.84px;font-size:5.0px;line-height:6.00px;color:#000;letter-spacing:0.000px;left:183.00px;-webkit-text-stroke:0.14px currentColor;">Partida 4</span>
<span style="top:178.23px;font-size:5.0px;line-height:6.00px;color:#000;letter-spacing:0.000px;left:37.20px;-webkit-text-stroke:0.14px currentColor;">216 Mobiliario</span>
<span style="top:178.23px;font-size:5.0px;line-height:6.00px;color:#000;letter-spacing:0.000px;right:671.70px;-webkit-text-stroke:0.14px currentColor;">30.000</span>
<span style="top:178.23px;font-size:5.0px;line-height:6.00px;color:#000;letter-spacing:0.000px;left:183.00px;-webkit-text-stroke:0.14px currentColor;">Partida 5</span>
<span style="top:185.62px;font-size:5.0px;line-height:6.00px;color:#000;letter-spacing:0.000px;left:37.20px;-webkit-text-stroke:0.05px currentColor;">218 Furgoneta</span>
<span style="top:185.62px;font-size:5.0px;line-height:6.00px;color:#000;letter-spacing:0.000px;right:671.70px;-webkit-text-stroke:0.05px currentColor;">20.000</span>
<span style="top:185.62px;font-size:5.0px;line-height:6.00px;color:#000;letter-spacing:0.000px;left:183.00px;-webkit-text-stroke:0.05px currentColor;">Partida 7</span>
<span style="top:193.01px;font-size:5.0px;line-height:6.00px;color:#000;letter-spacing:0.000px;left:37.20px;-webkit-text-stroke:0.14px currentColor;">281 Amortización acumulada</span>
<span style="top:193.01px;font-size:5.0px;line-height:6.00px;color:#000;letter-spacing:0.000px;right:671.70px;-webkit-text-stroke:0.14px currentColor;">-200.000</span>
<span style="top:193.01px;font-size:5.0px;line-height:6.00px;color:#000;letter-spacing:0.000px;left:183.00px;-webkit-text-stroke:0.14px currentColor;">Partida 16</span>
<span style="top:244.74px;font-size:5.0px;line-height:6.00px;color:#000;letter-spacing:0.000px;left:37.20px;-webkit-text-stroke:0.05px currentColor;">300 Mercaderías</span>
<span style="top:244.74px;font-size:5.0px;line-height:6.00px;color:#000;letter-spacing:0.000px;right:671.70px;-webkit-text-stroke:0.05px currentColor;">95.000</span>
<span style="top:244.74px;font-size:5.0px;line-height:6.00px;color:#000;letter-spacing:0.000px;left:183.00px;-webkit-text-stroke:0.05px currentColor;">Partida 6</span>
<span style="top:252.13px;font-size:5.0px;line-height:6.00px;color:#000;letter-spacing:0.000px;left:37.20px;-webkit-text-stroke:0.05px currentColor;">430 Clientes</span>
<span style="top:252.13px;font-size:5.0px;line-height:6.00px;color:#000;letter-spacing:0.000px;right:671.70px;-webkit-text-stroke:0.05px currentColor;">90.000</span>
<span style="top:252.13px;font-size:5.0px;line-height:6.00px;color:#000;letter-spacing:0.000px;left:183.00px;-webkit-text-stroke:0.05px currentColor;">Partida 8</span>
<span style="top:259.52px;font-size:5.0px;line-height:6.00px;color:#000;letter-spacing:0.000px;left:37.20px;-webkit-text-stroke:0.14px currentColor;">431 Efectos comerciales a cobrar</span>
<span style="top:259.52px;font-size:5.0px;line-height:6.00px;color:#000;letter-spacing:0.000px;right:671.70px;-webkit-text-stroke:0.14px currentColor;">110.000</span>
<span style="top:259.52px;font-size:5.0px;line-height:6.00px;color:#000;letter-spacing:0.000px;left:183.00px;-webkit-text-stroke:0.14px currentColor;">Partida 8</span>
<span style="top:266.91px;font-size:5.0px;line-height:6.00px;color:#000;letter-spacing:0.000px;left:37.20px;-webkit-text-stroke:0.05px currentColor;">572 Bancos</span>
<span style="top:266.91px;font-size:5.0px;line-height:6.00px;color:#000;letter-spacing:0.000px;right:671.70px;-webkit-text-stroke:0.05px currentColor;">15.000</span>
<span style="top:266.91px;font-size:5.0px;line-height:6.00px;color:#000;letter-spacing:0.000px;left:183.00px;-webkit-text-stroke:0.05px currentColor;">Partida 9</span>
<span style="top:274.30px;font-size:5.0px;line-height:6.00px;color:#000;letter-spacing:0.000px;left:37.20px;-webkit-text-stroke:0.14px currentColor;">570 Caja</span>
<span style="top:274.30px;font-size:5.0px;line-height:6.00px;color:#000;letter-spacing:0.000px;right:671.70px;-webkit-text-stroke:0.14px currentColor;">2.000</span>
<span style="top:274.30px;font-size:5.0px;line-height:6.00px;color:#000;letter-spacing:0.000px;left:183.00px;-webkit-text-stroke:0.14px currentColor;">Partida 10</span>
<span style="top:141.28px;font-size:5.0px;line-height:6.00px;color:#000;letter-spacing:0.000px;left:211.00px;-webkit-text-stroke:0.05px currentColor;">100 Capital Social</span>
<span style="top:141.28px;font-size:5.0px;line-height:6.00px;color:#000;letter-spacing:0.000px;right:502.20px;-webkit-text-stroke:0.05px currentColor;">250.000</span>
<span style="top:141.28px;font-size:5.0px;line-height:6.00px;color:#000;letter-spacing:0.000px;left:350.50px;-webkit-text-stroke:0.05px currentColor;">Partida 14</span>
<span style="top:148.67px;font-size:5.0px;line-height:6.00px;color:#000;letter-spacing:0.000px;left:211.00px;-webkit-text-stroke:0.05px currentColor;">129 Resultado del ejercicio</span>
<span style="top:148.67px;font-size:5.0px;line-height:6.00px;color:#000;letter-spacing:0.000px;right:502.20px;-webkit-text-stroke:0.05px currentColor;">5.000</span>
<span style="top:148.67px;font-size:5.0px;line-height:6.00px;color:#000;letter-spacing:0.000px;left:350.50px;-webkit-text-stroke:0.05px currentColor;">Partida 15</span>
<span style="top:156.06px;font-size:5.0px;line-height:6.00px;color:#000;letter-spacing:0.000px;left:211.00px;-webkit-text-stroke:0.14px currentColor;">113 Reservas</span>
<span style="top:207.79px;font-size:5.0px;line-height:6.00px;color:#000;letter-spacing:0.000px;left:211.00px;-webkit-text-stroke:0.05px currentColor;">170 Deudas a Largo Plazo</span>
<span style="top:207.79px;font-size:5.0px;line-height:6.00px;color:#000;letter-spacing:0.000px;right:502.20px;-webkit-text-stroke:0.05px currentColor;">195.000</span>
<span style="top:207.79px;font-size:5.0px;line-height:6.00px;color:#000;letter-spacing:0.000px;left:350.50px;-webkit-text-stroke:0.05px currentColor;">Partida 2 y 7</span>
<span style="top:244.74px;font-size:5.0px;line-height:6.00px;color:#000;letter-spacing:0.000px;left:211.00px;-webkit-text-stroke:0.05px currentColor;">520 Deudas a Corto Plazo</span>
<span style="top:244.74px;font-size:5.0px;line-height:6.00px;color:#000;letter-spacing:0.000px;right:502.20px;-webkit-text-stroke:0.05px currentColor;">14.000</span>
<span style="top:244.74px;font-size:5.0px;line-height:6.00px;color:#000;letter-spacing:0.000px;left:350.50px;-webkit-text-stroke:0.05px currentColor;">Partida 2</span>
<span style="top:252.13px;font-size:5.0px;line-height:6.00px;color:#000;letter-spacing:0.000px;left:211.00px;-webkit-text-stroke:0.05px currentColor;">400 Proveedores</span>
<span style="top:252.13px;font-size:5.0px;line-height:6.00px;color:#000;letter-spacing:0.000px;right:502.20px;-webkit-text-stroke:0.05px currentColor;">30.000</span>
<span style="top:252.13px;font-size:5.0px;line-height:6.00px;color:#000;letter-spacing:0.000px;left:350.50px;-webkit-text-stroke:0.05px currentColor;">Partida 11</span>
<span style="top:259.52px;font-size:5.0px;line-height:6.00px;color:#000;letter-spacing:0.000px;left:211.00px;-webkit-text-stroke:0.14px currentColor;">401 Proveedores, efectos a pagar</span>
<span style="top:259.52px;font-size:5.0px;line-height:6.00px;color:#000;letter-spacing:0.000px;right:502.20px;-webkit-text-stroke:0.14px currentColor;">40.000</span>
<span style="top:259.52px;font-size:5.0px;line-height:6.00px;color:#000;letter-spacing:0.000px;left:350.50px;-webkit-text-stroke:0.14px currentColor;">Partida 11</span>
<span style="top:266.91px;font-size:5.0px;line-height:6.00px;color:#000;letter-spacing:0.000px;left:211.00px;-webkit-text-stroke:0.05px currentColor;">476 Organismos Seguridad Social</span>
<span style="top:266.91px;font-size:5.0px;line-height:6.00px;color:#000;letter-spacing:0.000px;right:502.20px;-webkit-text-stroke:0.05px currentColor;">4.000</span>
<span style="top:266.91px;font-size:5.0px;line-height:6.00px;color:#000;letter-spacing:0.000px;left:350.50px;-webkit-text-stroke:0.05px currentColor;">Partida 12</span>
<span style="top:274.30px;font-size:5.0px;line-height:6.00px;color:#000;letter-spacing:0.000px;left:211.00px;-webkit-text-stroke:0.14px currentColor;">475 Hacienda Pública acreedora</span>
<span style="top:274.30px;font-size:5.0px;line-height:6.00px;color:#000;letter-spacing:0.000px;right:502.20px;-webkit-text-stroke:0.14px currentColor;">4.000</span>
<span style="top:274.30px;font-size:5.0px;line-height:6.00px;color:#000;letter-spacing:0.000px;left:350.50px;-webkit-text-stroke:0.14px currentColor;">Partida 13</span>
<span style="top:156.06px;font-size:5.0px;line-height:6.00px;color:#1f7035;letter-spacing:0.000px;right:502.20px;-webkit-text-stroke:0.14px currentColor;">50.000</span>
<span style="top:200.40px;font-size:5.0px;line-height:6.00px;color:#000;letter-spacing:0.000px;left:211.00px;-webkit-text-stroke:0.05px currentColor;">Pasivo no corriente</span>
<span style="top:237.35px;font-size:5.0px;line-height:6.00px;color:#000;letter-spacing:0.000px;left:37.20px;-webkit-text-stroke:0.05px currentColor;">Activo corriente</span>
<span style="top:237.35px;font-size:5.0px;line-height:6.00px;color:#000;letter-spacing:0.000px;left:211.00px;-webkit-text-stroke:0.05px currentColor;">Pasivo corriente</span>
<span style="top:289.08px;font-size:5.0px;line-height:6.00px;color:#1f7035;letter-spacing:0.000px;right:671.70px;-webkit-text-stroke:0.05px currentColor;">645.000</span>
<span style="top:289.08px;font-size:5.0px;line-height:6.00px;color:#1f7035;letter-spacing:0.000px;right:502.20px;-webkit-text-stroke:0.05px currentColor;">645.000</span>
<span style="top:303.87px;font-size:5.0px;line-height:6.00px;color:#1f7035;letter-spacing:0.000px;left:211.00px;-webkit-text-stroke:0.05px currentColor;">Fondo de Maniobra</span>
<span style="top:303.87px;font-size:5.0px;line-height:6.00px;color:#1f7035;letter-spacing:0.000px;right:502.20px;-webkit-text-stroke:0.05px currentColor;">168.000</span>
<span style="top:311.25px;font-size:5.0px;line-height:6.00px;color:#1f7035;letter-spacing:0.000px;left:211.00px;-webkit-text-stroke:0.05px currentColor;">Ratio</span>
<span style="top:311.25px;font-size:5.0px;line-height:6.00px;color:#1f7035;letter-spacing:0.000px;right:502.20px;-webkit-text-stroke:0.05px currentColor;">3,39</span>
<div style="left:347.80px;top:310.71px;width:316.70px;height:6.69px;background:#fff;"></div>
<span style="top:311.25px;font-size:5.0px;line-height:6.00px;color:#000;letter-spacing:-0.040px;left:348.50px;">Es recomendable 2. Luego, es un valor excesivamente alto, lo que genera rentabilidad: dinero sin aprovechar. (Debería estar más cerca que 1)</span>
<div style="left:143.00px;top:287.89px;width:34.80px;height:7.99px;background:transparent;border:0.55px solid #505050;box-sizing:border-box;"></div>
<div style="left:309.80px;top:287.89px;width:37.50px;height:7.99px;background:transparent;border:0.55px solid #505050;box-sizing:border-box;"></div>
<span style="top:326.03px;font-size:5.0px;line-height:6.00px;color:#8a4c00;letter-spacing:-0.110px;font-weight:bold;left:37.20px;-webkit-text-stroke:0.14px currentColor;">Se pide identificar las cuentas correspondientes a las siguientes partidas de una empresa y calcular la partida que falta (Reservas), agrupándolas en las cinco masas patrimoniales habituales (ANC / AC / PN / PNC / PC):</span>
<span style="top:333.42px;font-size:5.0px;line-height:6.00px;color:#8a4c00;letter-spacing:-0.192px;font-weight:bold;left:37.20px;-webkit-text-stroke:0.14px currentColor;">Calcule el fondo de maniobra de la entidad.</span>
<div style="left:36.00px;top:340.27px;width:310.50px;height:6.69px;background:#fff;"></div>
<span style="top:340.81px;font-size:5.0px;line-height:6.00px;color:#000;letter-spacing:-0.065px;font-weight:bold;left:37.20px;-webkit-text-stroke:0.05px currentColor;">Partida 1. </span>
<span style="top:340.81px;font-size:5.0px;line-height:6.00px;color:#000;letter-spacing:0.018px;left:60.38px;-webkit-text-stroke:0.05px currentColor;">El edificio donde desarrolla su actividad está valorado en 480.000 €, de los cuales 100.000 corresponden al valor del terreno.</span>
<div style="left:36.00px;top:347.66px;width:469.40px;height:6.69px;background:#fff;"></div>
<span style="top:348.20px;font-size:5.0px;line-height:6.00px;color:#000;letter-spacing:-0.065px;font-weight:bold;left:37.20px;-webkit-text-stroke:0.14px currentColor;">Partida 2. </span>
<span style="top:348.20px;font-size:5.0px;line-height:6.00px;color:#000;letter-spacing:-0.068px;left:60.38px;-webkit-text-stroke:0.14px currentColor;">Cuando compró, hace unos años, las instalaciones, se solicitó un préstamo bancario del cual tiene pendiente de pago 190.000 € a largo plazo. Además debe 14.000 € en otro préstamo a corto plazo.</span>
<div style="left:36.00px;top:355.05px;width:273.60px;height:6.69px;background:#fff;"></div>
<span style="top:355.59px;font-size:5.0px;line-height:6.00px;color:#000;letter-spacing:-0.065px;font-weight:bold;left:37.20px;-webkit-text-stroke:0.05px currentColor;">Partida 3. </span>
<span style="top:355.59px;font-size:5.0px;line-height:6.00px;color:#000;letter-spacing:0.035px;left:60.38px;-webkit-text-stroke:0.05px currentColor;">El equipo informático está valorado en 60.000 € y los programas informáticos cuestan 12.000 € más.</span>
<div style="left:36.00px;top:362.44px;width:141.00px;height:6.69px;background:#fff;"></div>
<span style="top:362.99px;font-size:5.0px;line-height:6.00px;color:#000;letter-spacing:-0.065px;font-weight:bold;left:37.20px;-webkit-text-stroke:0.14px currentColor;">Partida 4. </span>
<span style="top:362.99px;font-size:5.0px;line-height:6.00px;color:#000;letter-spacing:0.011px;left:60.38px;-webkit-text-stroke:0.14px currentColor;">Adquirió la patente para un proceso por 15.000 €.</span>
<div style="left:36.00px;top:369.83px;width:173.30px;height:6.69px;background:#fff;"></div>
<span style="top:370.38px;font-size:5.0px;line-height:6.00px;color:#000;letter-spacing:-0.065px;font-weight:bold;left:37.20px;-webkit-text-stroke:0.05px currentColor;">Partida 5. </span>
<span style="top:370.38px;font-size:5.0px;line-height:6.00px;color:#000;letter-spacing:0.039px;left:60.38px;-webkit-text-stroke:0.05px currentColor;">El mobiliario de la empresa fue adquirido por 30.000 €.</span>
<div style="left:36.00px;top:377.22px;width:173.30px;height:6.69px;background:#fff;"></div>
<span style="top:377.76px;font-size:5.0px;line-height:6.00px;color:#000;letter-spacing:-0.065px;font-weight:bold;left:37.20px;-webkit-text-stroke:0.14px currentColor;">Partida 6. </span>
<span style="top:377.76px;font-size:5.0px;line-height:6.00px;color:#000;letter-spacing:0.086px;left:60.38px;-webkit-text-stroke:0.14px currentColor;">Mantiene en almacén mercancías por importe de 95.000 €.</span>
<div style="left:36.00px;top:384.61px;width:310.50px;height:6.69px;background:#fff;"></div>
<span style="top:385.15px;font-size:5.0px;line-height:6.00px;color:#000;letter-spacing:-0.065px;font-weight:bold;left:37.20px;-webkit-text-stroke:0.14px currentColor;">Partida 7. </span>
<span style="top:385.15px;font-size:5.0px;line-height:6.00px;color:#000;letter-spacing:-0.016px;left:60.38px;-webkit-text-stroke:0.14px currentColor;">Dispone de una furgoneta de reparto por 20.000 € mediante un préstamo a cinco años del que quedan por pagar 5.000 €</span>
<div style="left:36.00px;top:392.00px;width:273.60px;height:6.69px;background:#fff;"></div>
<span style="top:392.54px;font-size:5.0px;line-height:6.00px;color:#000;letter-spacing:-0.065px;font-weight:bold;left:37.20px;-webkit-text-stroke:0.05px currentColor;">Partida 8. </span>
<span style="top:392.54px;font-size:5.0px;line-height:6.00px;color:#000;letter-spacing:0.048px;left:60.38px;-webkit-text-stroke:0.05px currentColor;">Los clientes deben a la empresa facturas por importe de 90.000 € y letras por 110.000 €.</span>
<div style="left:36.00px;top:399.39px;width:273.60px;height:6.69px;background:#fff;"></div>
<span style="top:399.93px;font-size:5.0px;line-height:6.00px;color:#000;letter-spacing:-0.065px;font-weight:bold;left:37.20px;-webkit-text-stroke:0.05px currentColor;">Partida 9. </span>
<span style="top:399.93px;font-size:5.0px;line-height:6.00px;color:#000;letter-spacing:-0.003px;left:60.38px;-webkit-text-stroke:0.05px currentColor;">Los saldos disponibles en cuentas corrientes bancarias ascienden a un total de 15.000 €.</span>
<div style="left:36.00px;top:406.78px;width:141.00px;height:6.69px;background:#fff;"></div>
<span style="top:407.32px;font-size:5.0px;line-height:6.00px;color:#000;letter-spacing:-0.067px;font-weight:bold;left:37.20px;-webkit-text-stroke:0.14px currentColor;">Partida 10. </span>
<span style="top:407.32px;font-size:5.0px;line-height:6.00px;color:#000;letter-spacing:0.022px;left:63.08px;-webkit-text-stroke:0.14px currentColor;">Mantiene un efectivo en caja de 2.000 €.</span>
<div style="left:36.00px;top:414.17px;width:273.60px;height:6.69px;background:#fff;"></div>
<span style="top:414.71px;font-size:5.0px;line-height:6.00px;color:#000;letter-spacing:-0.066px;font-weight:bold;left:37.20px;-webkit-text-stroke:0.14px currentColor;">Partida 11. </span>
<span style="top:414.71px;font-size:5.0px;line-height:6.00px;color:#000;letter-spacing:0.001px;left:62.81px;-webkit-text-stroke:0.14px currentColor;">Debe a sus proveedores 30.000 € en facturas y 40.000 € en letras.</span>
<div style="left:36.00px;top:421.56px;width:273.60px;height:6.69px;background:#fff;"></div>
<span style="top:422.10px;font-size:5.0px;line-height:6.00px;color:#000;letter-spacing:-0.067px;font-weight:bold;left:37.20px;-webkit-text-stroke:0.05px currentColor;">Partida 12. </span>
<span style="top:422.10px;font-size:5.0px;line-height:6.00px;color:#000;letter-spacing:-0.006px;left:63.08px;-webkit-text-stroke:0.05px currentColor;">Las cuotas pendientes de abonar a la Seguridad Social ascienden a 4.000 €.</span>
<div style="left:36.00px;top:428.95px;width:106.80px;height:6.69px;background:#fff;"></div>
<span style="top:429.49px;font-size:5.0px;line-height:6.00px;color:#000;letter-spacing:-0.067px;font-weight:bold;left:37.20px;-webkit-text-stroke:0.14px currentColor;">Partida 13. </span>
<span style="top:429.49px;font-size:5.0px;line-height:6.00px;color:#000;letter-spacing:-0.025px;left:63.08px;-webkit-text-stroke:0.14px currentColor;">Debe a la Hacienda Pública 4.000 €</span>
<div style="left:36.00px;top:436.34px;width:173.30px;height:6.69px;background:#fff;"></div>
<span style="top:436.88px;font-size:5.0px;line-height:6.00px;color:#000;letter-spacing:-0.067px;font-weight:bold;left:37.20px;-webkit-text-stroke:0.14px currentColor;">Partida 14. </span>
<span style="top:436.88px;font-size:5.0px;line-height:6.00px;color:#000;letter-spacing:0.004px;left:63.08px;-webkit-text-stroke:0.14px currentColor;">Los socios aportaron para crear la empresa 250.000 €.</span>
<div style="left:36.00px;top:443.73px;width:273.60px;height:6.69px;background:#fff;"></div>
<span style="top:444.27px;font-size:5.0px;line-height:6.00px;color:#000;letter-spacing:-0.067px;font-weight:bold;left:37.20px;-webkit-text-stroke:0.05px currentColor;">Partida 15. </span>
<span style="top:444.27px;font-size:5.0px;line-height:6.00px;color:#000;letter-spacing:0.013px;left:63.08px;-webkit-text-stroke:0.05px currentColor;">Hay contabilizados 5.000 € por el resultado del año pasado, pendientes de aplicar.</span>
<div style="left:36.00px;top:451.12px;width:273.60px;height:6.69px;background:#fff;"></div>
<span style="top:451.66px;font-size:5.0px;line-height:6.00px;color:#000;letter-spacing:-0.067px;font-weight:bold;left:37.20px;-webkit-text-stroke:0.14px currentColor;">Partida 16. </span>
<span style="top:451.66px;font-size:5.0px;line-height:6.00px;color:#000;letter-spacing:0.030px;left:63.08px;-webkit-text-stroke:0.14px currentColor;">La amortización acumulada durante los años anteriores asciende a 200.000 €.</span>
<span style="top:473.83px;font-size:5.0px;line-height:6.00px;color:#9c5700;letter-spacing:-0.218px;font-weight:bold;left:37.20px;-webkit-text-stroke:0.05px currentColor;">Notas</span>
<span style="top:481.22px;font-size:5.0px;line-height:6.00px;color:#9c5700;letter-spacing:0.002px;left:37.20px;-webkit-text-stroke:0.05px currentColor;">Nos olvidamos de los grupos 8 y 9 del PGC</span>
<span style="top:488.61px;font-size:5.0px;line-height:6.00px;color:#c49a45;letter-spacing:-0.131px;left:37.20px;-webkit-text-stroke:0.05px currentColor;">Las cuentas de los grupos 6 y 7 solo aparecen, operaciones, en la contabilidad (Partida Doble)</span>
<span style="top:496.00px;font-size:5.0px;line-height:6.00px;color:#7d4500;letter-spacing:0.022px;left:37.20px;-webkit-text-stroke:0.14px currentColor;">La amortización acumulada es 0 cuando los bienes son nuevos, en este caso como ha pasado un año de uso, los bienes han perdido valor o se han ido estropeando por eso es -200.000, menos el terreno que no es amortizable</span>
<span style="top:503.39px;font-size:5.0px;line-height:6.00px;color:#7d4500;letter-spacing:0.036px;left:37.20px;-webkit-text-stroke:0.14px currentColor;">Cuando los bienes estén ya infinitamente viejos el contable la amortización acumulada coincidirá con 0 como resultado, indicando que estoy con ya inservibles</span>
<div style="left:35.50px;top:132.50px;width:108.30px;height:8.39px;background:transparent;border:0.9px solid #3f7d4c;box-sizing:border-box;"></div>
<div style="left:142.10px;top:139.19px;width:2.20px;height:2.20px;background:#3f7d4c;"></div>
<div style="left:25.00px;top:514.30px;width:798.00px;height:11.40px;background:#2c2c2c;"></div>
<div style="left:123.00px;top:514.30px;width:203.50px;height:11.40px;background:#1e1e1e;"></div>
<div style="left:54.00px;top:514.30px;width:69.00px;height:9.80px;background:#ffffff;"></div>
<span style="top:516.24px;font-size:5.6px;line-height:6.72px;color:#3b7a50;letter-spacing:0.132px;left:-11.60px;width:200px;text-align:center;-webkit-text-stroke:0.15px currentColor;">Tema 2 - Ejercicio 1</span>
<span style="top:516.24px;font-size:5.6px;line-height:6.72px;color:#8e8e8e;letter-spacing:0.042px;left:56.80px;width:200px;text-align:center;">Tema 2 - Ejercicio 2</span>
<span style="top:516.24px;font-size:5.6px;line-height:6.72px;color:#8e8e8e;letter-spacing:0.042px;left:125.30px;width:200px;text-align:center;">Tema 2 - Ejercicio 3</span>
<span style="top:516.24px;font-size:5.6px;line-height:6.72px;color:#8e8e8e;letter-spacing:0.042px;left:192.60px;width:200px;text-align:center;">Tema 2 - Ejercicio 4</span>
<span style="top:514.50px;font-size:8px;line-height:9.60px;color:#dcdcdc;font-weight:bold;left:235.70px;width:200px;text-align:center;">+</span>
<div style="left:326.30px;top:515.50px;width:0.70px;height:8.50px;background:#4c4c4c;"></div>
<div style="left:344.50px;top:515.50px;width:0.60px;height:8.50px;background:#444444;"></div>
<svg style="left:30px;top:516.5px;width:18px;height:6px" viewBox="0 0 18 6"><path d="M5.2 0.6L2.6 3L5.2 5.4z M13.3 0.6L15.9 3L13.3 5.4z" fill="#555555"/></svg>
<div style="left:25.00px;top:525.70px;width:798.00px;height:10.30px;background:#3b3c3b;"></div>
<span style="top:528.56px;font-size:5.4px;line-height:6.48px;color:#d6d6d6;letter-spacing:-0.080px;font-weight:bold;left:37.00px;">Listo</span>
<span style="top:528.56px;font-size:5.4px;line-height:6.48px;color:#d6d6d6;letter-spacing:-0.015px;font-weight:bold;left:67.00px;">Accesibilidad: todo correcto</span>
<span style="top:528.48px;font-size:5.2px;line-height:6.24px;color:#d0d0d0;letter-spacing:0.051px;left:795.00px;">100 %</span>
<div style="left:734.00px;top:531.10px;width:45.50px;height:0.70px;background:#8a8a8a;"></div>
<div style="left:753.60px;top:528.00px;width:6.80px;height:6.80px;background:#a2a2a2;border-radius:50%;"></div>
<span style="top:527.60px;font-size:6px;line-height:7.20px;color:#d8d8d8;font-weight:bold;left:628.50px;width:200px;text-align:center;">−</span>
<span style="top:527.80px;font-size:6px;line-height:7.20px;color:#d8d8d8;font-weight:bold;left:685.00px;width:200px;text-align:center;">+</span>
<div style="left:674.00px;top:526.00px;width:17.00px;height:10.00px;background:#555555;"></div>
<svg style="left:125.60px;top:49.60px;width:8px;height:8px;overflow:visible;" viewBox="0 0 8 8"><path d="M0.5 3.9L4 0.7L7.5 3.9M1.4 3.3V7.4H3.1V4.9H4.9V7.4H6.6V3.3" fill="none" stroke="#e2e2e2" stroke-width="0.9" /></svg>
<svg style="left:137.80px;top:49.90px;width:7.5px;height:7.5px;overflow:visible;" viewBox="0 0 7.5 7.5"><path d="M0.5 0.5H5.8L7 1.7V7H0.5z" fill="none" stroke="#e6e6e6" stroke-width="0.9" /><path d="M2 0.5V2.8H5.2V0.5" fill="none" stroke="#e6e6e6" stroke-width="0.8" /><rect x="1.7" y="4.3" width="4.1" height="2.7" fill="#e6e6e6"/></svg>
<svg style="left:151.30px;top:49.60px;width:7px;height:8px;overflow:visible;" viewBox="0 0 7 8"><path d="M0.5 0.5H3.5V3H6.5V7.5H0.5z" fill="none" stroke="#e2e2e2" stroke-width="0.9" /><path d="M2 5L3.2 6.2L5.5 3.8" fill="none" stroke="#d6d6d6" stroke-width="0.8" /><path d="M5.2 0.3V2M4.4 1.2L5.2 2L6 1.2" fill="none" stroke="#d6d6d6" stroke-width="0.6" /></svg>
<svg style="left:163.20px;top:49.60px;width:7px;height:8px;overflow:visible;" viewBox="0 0 7 8"><path d="M0.8 0.8V3.5H3.5M0.9 3.4C2 1.1 5.4 0.9 6 3.3C6.4 5.1 4.6 6.1 2.6 7.6" fill="none" stroke="#e0e0e0" stroke-width="0.9" /></svg>
<svg style="left:173.90px;top:53.20px;width:2.8px;height:1.4px;overflow:visible;" viewBox="0 0 2.8 1.4"><path d="M0 0L1.4 1.4L2.8 0" fill="none" stroke="#bdbdbd" stroke-width="0.75"/></svg>
<svg style="left:181.30px;top:49.60px;width:8px;height:8px;overflow:visible;" viewBox="0 0 8 8"><path d="M7.3 0.6V3.2H4.7M7.1 3.1A3.3 3.3 0 1 0 7.2 5.4" fill="none" stroke="#e0e0e0" stroke-width="0.95" /></svg>
<div style="left:194.30px;top:53.20px;width:1.10px;height:1.10px;background:#8c8c8c;border-radius:50%;"></div>
<div style="left:196.90px;top:53.20px;width:1.10px;height:1.10px;background:#8c8c8c;border-radius:50%;"></div>
<div style="left:199.50px;top:53.20px;width:1.10px;height:1.10px;background:#8c8c8c;border-radius:50%;"></div>
<svg style="left:329.00px;top:49.50px;width:6px;height:7px;overflow:visible;" viewBox="0 0 6 7"><path d="M0.3 0.3H4L5.7 2V6.7H0.3z" fill="#e8e8e8"/><rect x="1" y="3" width="4" height="3.2" fill="#2e8b57"/><path d="M4 0.3V2H5.7" fill="#bdbdbd"/></svg>
<svg style="left:516.80px;top:52.55px;width:3.0px;height:1.5px;overflow:visible;" viewBox="0 0 3.0 1.5"><path d="M0 0L1.5 1.5L3.0 0" fill="none" stroke="#8a8a8a" stroke-width="0.75"/></svg>
<svg style="left:793.00px;top:49.60px;width:8px;height:8px;overflow:visible;" viewBox="0 0 8 8"><path d="M3.2 0.7A2.5 2.5 0 1 0 3.2 5.7A2.5 2.5 0 1 0 3.2 0.7M5 5L7.4 7.4" fill="none" stroke="#b8b8b8" stroke-width="0.85" /></svg>
<svg style="left:810.00px;top:49.40px;width:8px;height:8px;overflow:visible;" viewBox="0 0 8 8"><path d="M3 5L5.4 2.6M4.2 1.6L5 0.9A1.5 1.5 0 0 1 7.1 3L6.2 3.9M3.8 6.4L3 7.1A1.5 1.5 0 0 1 0.9 5L1.8 4.1" fill="none" stroke="#b8b8b8" stroke-width="0.85" /></svg>
<svg style="left:320.00px;top:63.80px;width:6.5px;height:7.5px;overflow:visible;" viewBox="0 0 6.5 7.5"><path d="M3.2 0.6A2.4 2.4 0 0 0 1.8 4.9V6H4.6V4.9A2.4 2.4 0 0 0 3.2 0.6M2.2 7H4.2" fill="none" stroke="#cfcfcf" stroke-width="0.7" /></svg>
<svg style="left:725.00px;top:64.80px;width:6px;height:6px;overflow:visible;" viewBox="0 0 6 6"><path d="M0.6 2.6V5.4H4.4V2.6M2.5 3.8V0.6M1.2 1.8L2.5 0.5L3.8 1.8" fill="none" stroke="#f0f0f0" stroke-width="0.7" /></svg>
<svg style="left:772.00px;top:64.80px;width:6px;height:6px;overflow:visible;" viewBox="0 0 6 6"><path d="M0.6 0.8H5.4V4.2H2.6L1.4 5.4V4.2H0.6z" fill="none" stroke="#f0f0f0" stroke-width="0.7" /></svg>
<svg style="left:33.50px;top:78.50px;width:13.5px;height:15px;overflow:visible;" viewBox="0 0 13.5 15"><rect x="0.9" y="2.7" width="7.2" height="10.8" rx="0.6" fill="none" stroke="#e0a030" stroke-width="1.2"/><rect x="2.7" y="1" width="3.6" height="2.2" rx="0.5" fill="#9a9a9a"/><rect x="7.6" y="5.4" width="5.1" height="8.8" fill="#2b2b2b" stroke="#e6e6e6" stroke-width="0.9"/><path d="M9.2 4.2V1.8M8.3 2.7L9.2 1.7L10.1 2.7" fill="none" stroke="#e8b040" stroke-width="0.7"/></svg>
<svg style="left:48.10px;top:84.45px;width:3.0px;height:1.5px;overflow:visible;" viewBox="0 0 3.0 1.5"><path d="M0 0L1.5 1.5L3.0 0" fill="none" stroke="#c4c4c4" stroke-width="0.75"/></svg>
<svg style="left:54.50px;top:77.50px;width:6px;height:8px;overflow:visible;" viewBox="0 0 6 8"><path d="M1.6 0.4L4 4.6M4.4 0.4L2 4.6" fill="none" stroke="#d0d0d0" stroke-width="0.6" /><circle cx="1.7" cy="6" r="1.1" fill="none" stroke="#4a8ad8" stroke-width="0.7"/><circle cx="4.3" cy="6" r="1.1" fill="none" stroke="#4a8ad8" stroke-width="0.7"/></svg>
<svg style="left:54.00px;top:87.50px;width:8px;height:8px;overflow:visible;" viewBox="0 0 8 8"><path d="M0.5 0.5H4.2V5.8H0.5z" fill="none" stroke="#d6d6d6" stroke-width="0.75" /><path d="M3 2.4H7.2V7.5H3z" fill="#2b2b2b" stroke="#d6d6d6" stroke-width="0.75" /></svg>
<svg style="left:82.90px;top:91.35px;width:2.6px;height:1.3px;overflow:visible;" viewBox="0 0 2.6 1.3"><path d="M0 0L1.3 1.3L2.6 0" fill="none" stroke="#c4c4c4" stroke-width="0.75"/></svg>
<svg style="left:54.50px;top:97.50px;width:7.5px;height:8px;overflow:visible;" viewBox="0 0 7.5 8"><path d="M2.2 2.2L5.4 0.6L6.4 2.4L3.2 4z" fill="none" stroke="#e8e8e8" stroke-width="0.7"/><path d="M0.8 4.8L3.4 3.6L4.6 5.8L2 7.4z" fill="#e8a33a"/><path d="M1.2 5.6L2.4 7.2" stroke="#d04a4a" stroke-width="0.8"/></svg>
<svg style="left:156.10px;top:83.60px;width:2.8px;height:1.4px;overflow:visible;" viewBox="0 0 2.8 1.4"><path d="M0 0L1.4 1.4L2.8 0" fill="none" stroke="#c4c4c4" stroke-width="0.75"/></svg>
<svg style="left:182.60px;top:83.60px;width:2.8px;height:1.4px;overflow:visible;" viewBox="0 0 2.8 1.4"><path d="M0 0L1.4 1.4L2.8 0" fill="none" stroke="#c4c4c4" stroke-width="0.75"/></svg>
<span style="top:80.10px;font-size:7px;line-height:8.40px;color:#d6d6d6;left:191.00px;">A</span>
<span style="top:79.10px;font-size:4px;line-height:4.80px;color:#d6d6d6;left:196.00px;">^</span>
<span style="top:81.32px;font-size:5.8px;line-height:6.96px;color:#d6d6d6;left:203.50px;">A</span>
<span style="top:79.80px;font-size:4.5px;line-height:5.40px;color:#d6d6d6;left:207.80px;">ˇ</span>
<svg style="left:133.50px;top:98.15px;width:2.6px;height:1.3px;overflow:visible;" viewBox="0 0 2.6 1.3"><path d="M0 0L1.3 1.3L2.6 0" fill="none" stroke="#c4c4c4" stroke-width="0.75"/></svg>
<div style="left:141.50px;top:94.50px;width:0.60px;height:8.00px;background:#3e3e3e;"></div>
<svg style="left:147.00px;top:94.70px;width:7.5px;height:7.5px;overflow:visible;" viewBox="0 0 7.5 7.5"><path d="M0.5 0.5H7V7H0.5z" fill="none" stroke="#8a8a8a" stroke-width="0.5" stroke-dasharray="0.8 0.6"/><path d="M0.5 0.3V7H7" fill="none" stroke="#e2e2e2" stroke-width="0.9" /><path d="M3.7 0.5V7" fill="none" stroke="#9a9a9a" stroke-width="0.5" /></svg>
<svg style="left:157.90px;top:98.15px;width:2.6px;height:1.3px;overflow:visible;" viewBox="0 0 2.6 1.3"><path d="M0 0L1.3 1.3L2.6 0" fill="none" stroke="#c4c4c4" stroke-width="0.75"/></svg>
<div style="left:165.50px;top:94.50px;width:0.60px;height:8.00px;background:#3e3e3e;"></div>
<svg style="left:171.00px;top:94.00px;width:8.5px;height:9px;overflow:visible;" viewBox="0 0 8.5 9"><path d="M2.4 4.4L5.2 1.2L6.8 2.6L4 5.8z" fill="none" stroke="#d6d6d6" stroke-width="0.7" /><path d="M5.4 0.8L6.6 0.2" fill="none" stroke="#d6d6d6" stroke-width="0.6" /><rect x="0.6" y="6.6" width="7.4" height="1.8" fill="#f2d03c"/></svg>
<svg style="left:182.50px;top:98.15px;width:2.6px;height:1.3px;overflow:visible;" viewBox="0 0 2.6 1.3"><path d="M0 0L1.3 1.3L2.6 0" fill="none" stroke="#c4c4c4" stroke-width="0.75"/></svg>
<span style="top:93.88px;font-size:6.2px;line-height:7.44px;color:#e0e0e0;left:92.70px;width:200px;text-align:center;">A</span>
<div style="left:189.00px;top:100.80px;width:7.40px;height:1.70px;background:#e0473d;"></div>
<svg style="left:200.20px;top:98.15px;width:2.6px;height:1.3px;overflow:visible;" viewBox="0 0 2.6 1.3"><path d="M0 0L1.3 1.3L2.6 0" fill="none" stroke="#c4c4c4" stroke-width="0.75"/></svg>
<svg style="left:223.00px;top:81.20px;width:8px;height:8px;overflow:visible;" viewBox="0 0 8 8"><path d="M0 0.5H8" stroke="#d0d0d0" stroke-width="0.8"/><path d="M1.2 2.3H6.8" stroke="#d0d0d0" stroke-width="0.8"/></svg>
<svg style="left:235.00px;top:81.60px;width:8px;height:8px;overflow:visible;" viewBox="0 0 8 8"><path d="M0 0.5H7" stroke="#d0d0d0" stroke-width="0.8"/><path d="M0 2.4H7" stroke="#d0d0d0" stroke-width="0.8"/><path d="M0 4.3H7" stroke="#d0d0d0" stroke-width="0.8"/></svg>
<div style="left:245.80px;top:78.80px;width:10.60px;height:10.80px;background:#555555;border-radius:1px;"></div>
<svg style="left:247.20px;top:84.00px;width:8px;height:8px;overflow:visible;" viewBox="0 0 8 8"><path d="M0 0.5H8" stroke="#e8e8e8" stroke-width="0.8"/><path d="M1.2 2.3H6.8" stroke="#e8e8e8" stroke-width="0.8"/></svg>
<svg style="left:223.00px;top:95.60px;width:8px;height:8px;overflow:visible;" viewBox="0 0 8 8"><path d="M0 0.5H8" stroke="#6e6e6e" stroke-width="0.7"/><path d="M0 2.4H5" stroke="#6e6e6e" stroke-width="0.7"/><path d="M0 4.3H8" stroke="#6e6e6e" stroke-width="0.7"/></svg>
<svg style="left:235.00px;top:95.60px;width:8px;height:8px;overflow:visible;" viewBox="0 0 8 8"><path d="M0 0.5H7" stroke="#6e6e6e" stroke-width="0.7"/><path d="M1 2.4H6" stroke="#6e6e6e" stroke-width="0.7"/><path d="M0 4.3H7" stroke="#6e6e6e" stroke-width="0.7"/></svg>
<svg style="left:247.00px;top:95.60px;width:8px;height:8px;overflow:visible;" viewBox="0 0 8 8"><path d="M0 0.5H8" stroke="#6e6e6e" stroke-width="0.7"/><path d="M3 2.4H8" stroke="#6e6e6e" stroke-width="0.7"/><path d="M0 4.3H8" stroke="#6e6e6e" stroke-width="0.7"/></svg>
<svg style="left:266.00px;top:80.00px;width:8px;height:8px;overflow:visible;" viewBox="0 0 8 8"><path d="M0.8 6.8L5.6 1.4" fill="none" stroke="#4a8ad8" stroke-width="0.7" /><path d="M4.4 1.2L5.8 1.2L5.8 2.8" fill="none" stroke="#4a8ad8" stroke-width="0.7" /><text x="0" y="4" font-size="4" fill="#d8d8d8" font-family="Liberation Sans,sans-serif">ab</text></svg>
<svg style="left:277.10px;top:83.75px;width:2.6px;height:1.3px;overflow:visible;" viewBox="0 0 2.6 1.3"><path d="M0 0L1.3 1.3L2.6 0" fill="none" stroke="#c4c4c4" stroke-width="0.75"/></svg>
<svg style="left:266.00px;top:95.00px;width:8px;height:7px;overflow:visible;" viewBox="0 0 8 7"><path d="M0 0.6H8M3.6 2.6H8M3.6 4.4H8M0 6.4H8" fill="none" stroke="#8a8a8a" stroke-width="0.65" /><path d="M2.4 2.2L0.6 3.5L2.4 4.8" fill="none" stroke="#4a8ad8" stroke-width="0.7" /></svg>
<svg style="left:278.00px;top:95.00px;width:8px;height:7px;overflow:visible;" viewBox="0 0 8 7"><path d="M0 0.6H8M3.6 2.6H8M3.6 4.4H8M0 6.4H8" fill="none" stroke="#8a8a8a" stroke-width="0.65" /><path d="M0.6 2.2L2.4 3.5L0.6 4.8" fill="none" stroke="#4a8ad8" stroke-width="0.7" /></svg>
<svg style="left:297.00px;top:80.00px;width:8px;height:9px;overflow:visible;" viewBox="0 0 8 9"><text x="0.8" y="4" font-size="4.2" fill="#d8d8d8" font-family="Liberation Sans,sans-serif">ab</text><path d="M0.6 5.4H3M0.6 7.6H3" fill="none" stroke="#d6d6d6" stroke-width="0.6" /><path d="M4 5.4H6.2A1.1 1.1 0 0 1 6.2 7.6H4.6M5.4 6.8L4.5 7.6L5.4 8.4" fill="none" stroke="#4a8ad8" stroke-width="0.65" /></svg>
<svg style="left:339.20px;top:83.75px;width:2.6px;height:1.3px;overflow:visible;" viewBox="0 0 2.6 1.3"><path d="M0 0L1.3 1.3L2.6 0" fill="none" stroke="#c4c4c4" stroke-width="0.75"/></svg>
<svg style="left:296.00px;top:94.20px;width:8.5px;height:8.5px;overflow:visible;" viewBox="0 0 8.5 8.5"><path d="M0.5 0.5H8V8H0.5z" fill="none" stroke="#e2e2e2" stroke-width="0.8" /><rect x="1.6" y="2.6" width="5.3" height="3.3" fill="#3a78c8"/><path d="M2.4 4.25H6.1M3.2 3.4L2.3 4.25L3.2 5.1M5.3 3.4L6.2 4.25L5.3 5.1" fill="none" stroke="#fff" stroke-width="0.5" /></svg>
<svg style="left:354.20px;top:98.15px;width:2.6px;height:1.3px;overflow:visible;" viewBox="0 0 2.6 1.3"><path d="M0 0L1.3 1.3L2.6 0" fill="none" stroke="#c4c4c4" stroke-width="0.75"/></svg>
<svg style="left:434.60px;top:83.60px;width:2.8px;height:1.4px;overflow:visible;" viewBox="0 0 2.8 1.4"><path d="M0 0L1.4 1.4L2.8 0" fill="none" stroke="#c4c4c4" stroke-width="0.75"/></svg>
<svg style="left:369.00px;top:94.80px;width:9px;height:7.5px;overflow:visible;" viewBox="0 0 9 7.5"><rect x="0.3" y="0.8" width="8" height="5.6" fill="#cfcfcf"/><rect x="1.2" y="1.8" width="6.2" height="3.6" fill="#2b2b2b"/><circle cx="4.3" cy="3.6" r="1.3" fill="#cfcfcf"/><circle cx="6.6" cy="5.8" r="1.5" fill="#e8a33a"/></svg>
<svg style="left:381.00px;top:98.15px;width:2.6px;height:1.3px;overflow:visible;" viewBox="0 0 2.6 1.3"><path d="M0 0L1.3 1.3L2.6 0" fill="none" stroke="#c4c4c4" stroke-width="0.75"/></svg>
<span style="top:93.64px;font-size:6.6px;line-height:7.92px;color:#d6d6d6;font-weight:bold;left:303.00px;width:200px;text-align:center;">9</span>
<div style="left:412.00px;top:94.50px;width:0.60px;height:8.00px;background:#3e3e3e;"></div>
<svg style="left:418.00px;top:94.30px;width:8px;height:8.5px;overflow:visible;" viewBox="0 0 8 8.5"><path d="M0.4 1.6H3M1.6 0.4L0.4 1.6L1.6 2.8" fill="none" stroke="#4a8ad8" stroke-width="0.75" /><text x="3.2" y="4.2" font-size="4.2" font-weight="bold" fill="#e4e4e4" font-family="Liberation Sans,sans-serif">0</text><text x="1.2" y="8.2" font-size="4.2" font-weight="bold" fill="#e4e4e4" font-family="Liberation Sans,sans-serif">,00</text></svg>
<svg style="left:431.00px;top:94.30px;width:8px;height:8.5px;overflow:visible;" viewBox="0 0 8 8.5"><path d="M0.4 1.6H3M1.8 0.4L3 1.6L1.8 2.8" fill="none" stroke="#4a8ad8" stroke-width="0.75" /><text x="3.4" y="4.2" font-size="4.2" font-weight="bold" fill="#e4e4e4" font-family="Liberation Sans,sans-serif">00</text><text x="2.6" y="8.2" font-size="4.2" font-weight="bold" fill="#e4e4e4" font-family="Liberation Sans,sans-serif">,0</text></svg>
<svg style="left:453.80px;top:80.00px;width:13.5px;height:11.5px;overflow:visible;" viewBox="0 0 13.5 11.5"><rect x="0.4" y="0.4" width="12.7" height="10.7" fill="none" stroke="#dcdcdc" stroke-width="0.8"/><path d="M0.4 3.45H13.1M0.4 7.13H13.1M4.46 0.4V11.1M8.91 0.4V11.1" fill="none" stroke="#9a9a9a" stroke-width="0.5" /><rect x="2" y="0.8" width="8.5" height="3.4" rx="1.4" fill="#d8433c"/><rect x="3" y="4.2" width="5" height="3.2" fill="#3a78c8"/><rect x="2" y="7.4" width="8.5" height="3.4" rx="1.4" fill="#d8433c"/></svg>
<svg style="left:470.50px;top:84.25px;width:3.0px;height:1.5px;overflow:visible;" viewBox="0 0 3.0 1.5"><path d="M0 0L1.5 1.5L3.0 0" fill="none" stroke="#c4c4c4" stroke-width="0.75"/></svg>
<svg style="left:484.00px;top:80.00px;width:13.5px;height:11.5px;overflow:visible;" viewBox="0 0 13.5 11.5"><rect x="0.4" y="0.4" width="12.7" height="10.7" fill="none" stroke="#dcdcdc" stroke-width="0.8"/><path d="M0.4 3.45H13.1M0.4 7.13H13.1M4.46 0.4V11.1M8.91 0.4V11.1" fill="none" stroke="#9a9a9a" stroke-width="0.5" /><path d="M5 10.5L6 5.5L8.5 1.5L11 3.2L9 7.2L6.8 10z" fill="#3a78c8"/><path d="M9 1L11.5 2.8" stroke="#dcdcdc" stroke-width="0.8"/></svg>
<svg style="left:500.50px;top:84.25px;width:3.0px;height:1.5px;overflow:visible;" viewBox="0 0 3.0 1.5"><path d="M0 0L1.5 1.5L3.0 0" fill="none" stroke="#c4c4c4" stroke-width="0.75"/></svg>
<svg style="left:599.50px;top:88.00px;width:3px;height:5px;overflow:visible;" viewBox="0 0 3 5"><path d="M0.6 0.5L2.4 2.5L0.6 4.5" fill="none" stroke="#d0d0d0" stroke-width="0.8" /></svg>
<svg style="left:616.00px;top:80.50px;width:13.5px;height:11px;overflow:visible;" viewBox="0 0 13.5 11"><rect x="0.5" y="1.2" width="12" height="4.6" fill="#3a78c8"/><path d="M0.5 0.5V9.6H12.8" fill="none" stroke="#d6d6d6" stroke-width="0.8" /><path d="M0.5 7.6H12.8M4.4 5.8V9.6M8.6 5.8V9.6" fill="none" stroke="#b0b0b0" stroke-width="0.5" /></svg>
<svg style="left:632.50px;top:84.25px;width:3.0px;height:1.5px;overflow:visible;" viewBox="0 0 3.0 1.5"><path d="M0 0L1.5 1.5L3.0 0" fill="none" stroke="#c4c4c4" stroke-width="0.75"/></svg>
<svg style="left:639.00px;top:80.50px;width:13.5px;height:11px;overflow:visible;" viewBox="0 0 13.5 11"><rect x="2.4" y="1.6" width="7.2" height="4.2" fill="#3a78c8"/><path d="M0.5 0.5V9.6H12.8" fill="none" stroke="#d6d6d6" stroke-width="0.8" /><path d="M0.5 7.6H12.8M4.4 5.8V9.6M8.6 5.8V9.6" fill="none" stroke="#b0b0b0" stroke-width="0.5" /><path d="M9.6 1.6L12.6 5M12.6 1.6L9.6 5" fill="none" stroke="#e0673d" stroke-width="0.8" /></svg>
<svg style="left:655.50px;top:84.25px;width:3.0px;height:1.5px;overflow:visible;" viewBox="0 0 3.0 1.5"><path d="M0 0L1.5 1.5L3.0 0" fill="none" stroke="#c4c4c4" stroke-width="0.75"/></svg>
<svg style="left:662.00px;top:78.00px;width:13.5px;height:13.5px;overflow:visible;" viewBox="0 0 13.5 13.5"><path d="M3.4 1.6V0.6H8.4V1.6" fill="none" stroke="#3a78c8" stroke-width="0.7" /><rect x="3.4" y="3.4" width="5.2" height="6.2" fill="#3a78c8"/><path d="M0.5 2.6H12.6V12H0.5z" fill="none" stroke="#d6d6d6" stroke-width="0.8" /><path d="M3.4 2.6V12M8.6 2.6V12M0.5 9.6H12.6" fill="none" stroke="#b0b0b0" stroke-width="0.5" /></svg>
<svg style="left:678.50px;top:84.25px;width:3.0px;height:1.5px;overflow:visible;" viewBox="0 0 3.0 1.5"><path d="M0 0L1.5 1.5L3.0 0" fill="none" stroke="#c4c4c4" stroke-width="0.75"/></svg>
<svg style="left:695.00px;top:78.20px;width:6.5px;height:7px;overflow:visible;" viewBox="0 0 6.5 7"><path d="M5.8 1.4V0.5H0.7L3.6 3.5L0.7 6.5H5.8V5.6" fill="none" stroke="#d6d6d6" stroke-width="0.8" /></svg>
<svg style="left:729.80px;top:81.10px;width:2.8px;height:1.4px;overflow:visible;" viewBox="0 0 2.8 1.4"><path d="M0 0L1.4 1.4L2.8 0" fill="none" stroke="#c4c4c4" stroke-width="0.75"/></svg>
<svg style="left:694.00px;top:88.00px;width:8.5px;height:7.5px;overflow:visible;" viewBox="0 0 8.5 7.5"><path d="M0.5 0.3V7.2M8 0.3V7.2" fill="none" stroke="#d6d6d6" stroke-width="0.8" /><path d="M2.4 2.2H4.6V1L6.8 3.75L4.6 6.5V5.3H2.4z" fill="#3a78c8"/></svg>
<svg style="left:725.90px;top:91.35px;width:2.6px;height:1.3px;overflow:visible;" viewBox="0 0 2.6 1.3"><path d="M0 0L1.3 1.3L2.6 0" fill="none" stroke="#c4c4c4" stroke-width="0.75"/></svg>
<svg style="left:694.00px;top:98.00px;width:8px;height:7.5px;overflow:visible;" viewBox="0 0 8 7.5"><path d="M0.6 4.4L4 1L7.2 4.2L3.8 7z" fill="none" stroke="#cf8fa8" stroke-width="0.75"/><path d="M2.3 2.7L5.5 5.7" fill="none" stroke="#cf8fa8" stroke-width="0.7"/></svg>
<svg style="left:721.70px;top:101.35px;width:2.6px;height:1.3px;overflow:visible;" viewBox="0 0 2.6 1.3"><path d="M0 0L1.3 1.3L2.6 0" fill="none" stroke="#c4c4c4" stroke-width="0.75"/></svg>
<svg style="left:737.00px;top:78.80px;width:14px;height:13px;overflow:visible;" viewBox="0 0 14 13"><text x="0.4" y="5" font-size="5.4" fill="#4a8ad8" font-family="Liberation Sans,sans-serif">A</text><text x="0.6" y="11.6" font-size="5.4" fill="#d8d8d8" font-family="Liberation Sans,sans-serif">Z</text><path d="M5.4 3.4H13L10.2 7V11L8.4 9.8V7z" fill="none" stroke="#d6d6d6" stroke-width="0.8" /></svg>
<svg style="left:753.50px;top:84.25px;width:3.0px;height:1.5px;overflow:visible;" viewBox="0 0 3.0 1.5"><path d="M0 0L1.5 1.5L3.0 0" fill="none" stroke="#c4c4c4" stroke-width="0.75"/></svg>
<svg style="left:763.00px;top:78.00px;width:15px;height:15px;overflow:visible;" viewBox="0 0 15 15"><path d="M9 0.8A4.6 4.6 0 1 0 9 10A4.6 4.6 0 1 0 9 0.8M5.6 8.8L0.8 13.6" fill="none" stroke="#d6d6d6" stroke-width="0.9" /></svg>
<svg style="left:779.70px;top:84.25px;width:3.0px;height:1.5px;overflow:visible;" viewBox="0 0 3.0 1.5"><path d="M0 0L1.5 1.5L3.0 0" fill="none" stroke="#c4c4c4" stroke-width="0.75"/></svg>
<svg style="left:799.50px;top:77.50px;width:14.5px;height:14.5px;overflow:visible;" viewBox="0 0 14.5 14.5"><rect x="0.4" y="0.4" width="13.7" height="13.7" fill="none" stroke="#dcdcdc" stroke-width="0.8"/><path d="M0.4 4.35H14.1M0.4 8.99H14.1M4.79 0.4V14.1M9.57 0.4V14.1" fill="none" stroke="#9a9a9a" stroke-width="0.5" /><circle cx="7.4" cy="6.6" r="3.2" fill="#e8e8e8"/><path d="M7.4 3.4A3.2 3.2 0 0 1 7.4 9.8z" fill="#3a78c8"/><path d="M6.2 10H8.6V11.4H6.2z" fill="#b0b0b0"/></svg>
<svg style="left:59.50px;top:111.00px;width:4px;height:9px;overflow:visible;" viewBox="0 0 4 9"><path d="M2 0.6L3.6 3H0.4zM2 8.4L3.6 6H0.4z" fill="#c8c8c8"/></svg>
<svg style="left:71.50px;top:112.50px;width:6px;height:6px;overflow:visible;" viewBox="0 0 6 6"><path d="M0.8 0.8L5.2 5.2M5.2 0.8L0.8 5.2" fill="none" stroke="#5c5c5c" stroke-width="0.8" /></svg>
<svg style="left:83.50px;top:112.50px;width:8px;height:6px;overflow:visible;" viewBox="0 0 8 6"><path d="M0.8 3.4L2.8 5.2L7 0.8" fill="none" stroke="#5c5c5c" stroke-width="0.8" /></svg>
<svg style="left:817.20px;top:114.00px;width:4px;height:3px;overflow:visible;" viewBox="0 0 4 3"><path d="M0.3 0.3H3.7L2 2.6z" fill="#dcdcdc"/></svg>
<svg style="left:58.00px;top:527.50px;width:8px;height:8.5px;overflow:visible;" viewBox="0 0 8 8.5"><circle cx="4" cy="1.4" r="0.9" fill="#d0d0d0"/><path d="M1 3H7M4 3V5.4M2.2 8L4 5.4L5.8 8" fill="none" stroke="#d0d0d0" stroke-width="0.75" /><path d="M6.2 5.6L7 6.4L8.2 4.8" fill="none" stroke="#d0d0d0" stroke-width="0.6" /></svg>
<svg style="left:679.00px;top:528.40px;width:7px;height:6px;overflow:visible;" viewBox="0 0 7 6"><path d="M0.5 0.5H6.5V5.5H0.5zM0.5 2.2H6.5M0.5 3.9H6.5M2.4 0.5V5.5" fill="none" stroke="#e8e8e8" stroke-width="0.6" /></svg>
<svg style="left:695.00px;top:528.20px;width:7.5px;height:6.4px;overflow:visible;" viewBox="0 0 7.5 6.4"><rect x="0.4" y="0.4" width="6.7" height="5.6" fill="#e0e0e0"/><rect x="1.8" y="1.6" width="3.8" height="3.4" fill="#2b2b2b"/></svg>
<svg style="left:711.50px;top:528.20px;width:7.5px;height:6.4px;overflow:visible;" viewBox="0 0 7.5 6.4"><path d="M0.5 0.5H6.6V5.9H0.5M4.4 0.5V3H6.6" fill="none" stroke="#d8d8d8" stroke-width="0.7" /></svg>
</div></div>
</body></html>
